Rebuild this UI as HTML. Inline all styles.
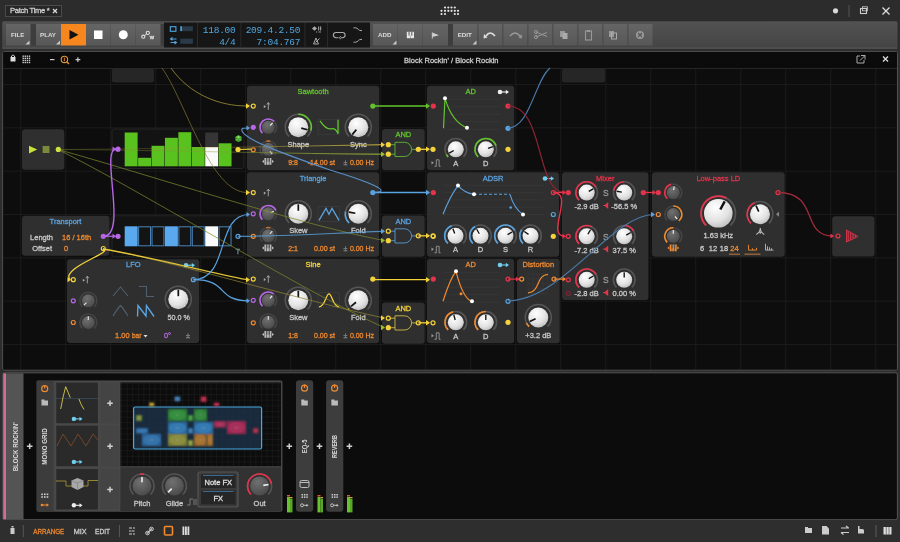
<!DOCTYPE html>
<html><head><meta charset="utf-8"><title>Patch Time</title>
<style>html,body{margin:0;padding:0;background:#0e0e0e;width:900px;height:542px;overflow:hidden} svg{display:block;will-change:transform} </style>
</head><body>
<svg width="900" height="542" viewBox="0 0 900 542" font-family='"Liberation Sans", sans-serif'>
<defs>
<radialGradient id="kw" cx="0.4" cy="0.3" r="0.8"><stop offset="0" stop-color="#ffffff"/><stop offset="0.6" stop-color="#e2e2e2"/><stop offset="1" stop-color="#b5b5b5"/></radialGradient>
<radialGradient id="kd" cx="0.4" cy="0.3" r="0.8"><stop offset="0" stop-color="#707070"/><stop offset="1" stop-color="#464646"/></radialGradient>
<linearGradient id="tb" x1="0" y1="0" x2="0" y2="1"><stop offset="0" stop-color="#525252"/><stop offset="1" stop-color="#444444"/></linearGradient>
<linearGradient id="btn" x1="0" y1="0" x2="0" y2="1"><stop offset="0" stop-color="#656565"/><stop offset="1" stop-color="#575757"/></linearGradient>
<pattern id="grid" x="20.2" y="84.0" width="45" height="43.333" patternUnits="userSpaceOnUse"><rect width="45" height="43.333" fill="#0d0d0d"/><path d="M0,0.5 H45 M0.5,0 V43.333" stroke="#1a1a1a" stroke-width="1"/></pattern>
<pattern id="fgrid" x="121" y="383" width="5.6" height="5.6" patternUnits="userSpaceOnUse"><rect width="5.6" height="5.6" fill="#0c0c0c"/><path d="M0,0 H5.6 M0,0 V5.6" stroke="#242424" stroke-width="0.7"/></pattern>
<filter id="bl" x="-30%" y="-30%" width="160%" height="160%"><feGaussianBlur stdDeviation="0.8"/></filter>
<radialGradient id="glow" cx="0.5" cy="0.5" r="0.6"><stop offset="0" stop-color="#fff" stop-opacity="0.18"/><stop offset="0.6" stop-color="#000" stop-opacity="0"/><stop offset="1" stop-color="#000" stop-opacity="0.3"/></radialGradient>
</defs>
<rect x="0" y="0" width="900" height="21" fill="#2c2c2c" />
<rect x="5.5" y="5.5" width="56" height="11" fill="#262626" stroke="#4a4a4a" stroke-width="1" />
<text x="10" y="13" font-size="7.6" fill="#d0d0d0" text-anchor="start" font-weight="normal" stroke="#d0d0d0" stroke-width="0.28" letter-spacing="-0.3">Patch Time *</text>
<path d="M53,9 L57,13 M57,9 L53,13" stroke="#ddd" fill="none" stroke-width="1.2" />
<circle cx="445" cy="7.5" r="1.1" fill="#e6e6e6" />
<circle cx="448.3" cy="7.5" r="1.1" fill="#e6e6e6" />
<circle cx="451.5" cy="7.5" r="1.1" fill="#e6e6e6" />
<circle cx="454.8" cy="7.5" r="1.1" fill="#e6e6e6" />
<circle cx="441.5" cy="10.8" r="1.1" fill="#e6e6e6" />
<circle cx="445" cy="10.8" r="1.1" fill="#e6e6e6" />
<circle cx="448.3" cy="10.8" r="1.1" fill="#e6e6e6" />
<circle cx="451.5" cy="10.8" r="1.1" fill="#e6e6e6" />
<circle cx="454.8" cy="10.8" r="1.1" fill="#e6e6e6" />
<circle cx="458" cy="10.8" r="1.1" fill="#e6e6e6" />
<circle cx="441.5" cy="14" r="1.1" fill="#e6e6e6" />
<circle cx="445" cy="14" r="1.1" fill="#e6e6e6" />
<circle cx="454.8" cy="14" r="1.1" fill="#e6e6e6" />
<circle cx="458" cy="14" r="1.1" fill="#e6e6e6" />
<circle cx="835.5" cy="10.8" r="2.6" fill="#d8d8d8" />
<line x1="849" y1="5" x2="849" y2="17" stroke="#555" stroke-width="1" />
<rect x="860.5" y="8.5" width="6" height="5" fill="none" stroke="#ccc" stroke-width="1.1" />
<rect x="862.5" y="6.8" width="5" height="4" fill="none" stroke="#ccc" stroke-width="0.8" />
<path d="M882.5,7.5 L889.5,14.5 M889.5,7.5 L882.5,14.5" stroke="#ddd" fill="none" stroke-width="1.3" />
<rect x="0" y="20.5" width="900" height="31" fill="#2c2c2c" />
<rect x="2.2" y="21.3" width="895.3" height="27" fill="url(#tb)" rx="1.5" />
<rect x="2.2" y="47.6" width="895.3" height="1.1" fill="#5a5a5a" />
<rect x="30.3" y="24" width="5.7" height="21.5" fill="#3d3d3d" />
<rect x="160" y="24" width="4" height="21.5" fill="#3d3d3d" />
<rect x="448" y="24" width="5" height="21.5" fill="#3d3d3d" />
<rect x="6" y="24" width="24.5" height="21.5" fill="url(#btn)" />
<path d="M29.5,44.5 L29.5,40.5 L25.5,44.5 Z" stroke="none" fill="#c8c8c8" stroke-width="1" />
<text x="17.75" y="37.4" font-size="6.2" fill="#dcdcdc" text-anchor="middle" font-weight="bold" >FILE</text>
<rect x="36" y="24" width="25" height="21.5" fill="url(#btn)" />
<path d="M60,44.5 L60,40.5 L56,44.5 Z" stroke="none" fill="#c8c8c8" stroke-width="1" />
<text x="48.0" y="37.4" font-size="6.2" fill="#dcdcdc" text-anchor="middle" font-weight="bold" >PLAY</text>
<rect x="61" y="24" width="25" height="21.5" fill="#f6871f" />
<path d="M69.5,30 L78.5,34.75 L69.5,39.5 Z" stroke="none" fill="#111" stroke-width="1" />
<rect x="86" y="24" width="24.5" height="21.5" fill="url(#btn)" />
<rect x="94" y="30.5" width="8.5" height="8.5" fill="#fff" />
<rect x="111" y="24" width="24.5" height="21.5" fill="url(#btn)" />
<circle cx="123.3" cy="34.7" r="4.5" fill="#fff" />
<rect x="136" y="24" width="24.5" height="21.5" fill="url(#btn)" />
<circle cx="143.3" cy="36.7" r="1.6" fill="none" stroke="#e0e0e0" stroke-width="1.1" />
<circle cx="147.8" cy="32.9" r="1.6" fill="none" stroke="#e0e0e0" stroke-width="1.1" />
<line x1="144.5" y1="35.6" x2="146.7" y2="34" stroke="#e0e0e0" stroke-width="1" />
<text x="152" y="38.8" font-size="6" fill="#e0e0e0" text-anchor="middle" font-weight="normal" stroke="#e0e0e0" stroke-width="0.28" >w</text>
<rect x="164" y="22.5" width="206" height="25" fill="#161616" />
<line x1="197.5" y1="23" x2="197.5" y2="47" stroke="#2a2a2a" stroke-width="1" />
<line x1="240.8" y1="23" x2="240.8" y2="47" stroke="#2a2a2a" stroke-width="1" />
<line x1="305" y1="23" x2="305" y2="47" stroke="#2a2a2a" stroke-width="1" />
<line x1="327.5" y1="23" x2="327.5" y2="47" stroke="#2a2a2a" stroke-width="1" />
<rect x="170.3" y="26.7" width="5.6" height="4.6" fill="none" stroke="#4fa6df" stroke-width="1.1" />
<rect x="180.3" y="26.3" width="12.6" height="4.8" fill="#2a3a48" />
<rect x="180.3" y="26.3" width="1.6" height="4.8" fill="#4fa6df" />
<path d="M170.5,39 H176.5 M172.5,37.3 L170.5,39 L172.5,40.3 M170.5,42.5 H176.5 M174.5,41.2 L176.5,42.5 L174.5,44" stroke="#4fa6df" fill="none" stroke-width="1.1" />
<rect x="180.3" y="38.6" width="12.6" height="5.2" fill="#2a3a48" />
<text x="235.5" y="32.8" font-size="9.5" fill="#4fa6df" text-anchor="end" font-weight="normal" font-family="Liberation Mono" letter-spacing="-0.25">118.00</text>
<text x="235.5" y="44.6" font-size="9.5" fill="#4fa6df" text-anchor="end" font-weight="normal" font-family="Liberation Mono" letter-spacing="-0.25">4/4</text>
<text x="300.2" y="32.8" font-size="9.5" fill="#4fa6df" text-anchor="end" font-weight="normal" font-family="Liberation Mono" letter-spacing="-0.25">209.4.2.50</text>
<text x="300.2" y="44.6" font-size="9.5" fill="#4fa6df" text-anchor="end" font-weight="normal" font-family="Liberation Mono" letter-spacing="-0.25">7:04.767</text>
<path d="M312,28.5 L314.5,26.2 L317,28.5 L314.5,30.8 Z" stroke="none" fill="#aaa" stroke-width="1" />
<rect x="318" y="26.5" width="1.2" height="4" fill="#999" />
<rect x="320" y="26.5" width="1.2" height="4" fill="#999" />
<path d="M316,32 h1.2 M318.5,32 h2.5" stroke="#999" fill="none" stroke-width="1" />
<path d="M313.5,44 L316,38 L318.5,44 Z M315.5,42.5 L319.5,38.5" stroke="#aaa" fill="none" stroke-width="1" />
<path d="M336,32.5 h6.5 a2.6,2.6 0 0 1 0,5.2 h-1.5 M338.5,37.7 h-2.5 a2.6,2.6 0 0 1 0,-5.2" stroke="#aaa" fill="none" stroke-width="1.1" />
<path d="M341,36.3 l-1.8,1.4 l1.8,1.4" stroke="#aaa" fill="none" stroke-width="0.9" />
<path d="M353.5,27.8 h2 q1.5,0 3,1.8 q1,1 2.5,1 h1" stroke="#aaa" fill="none" stroke-width="1" />
<path d="M353.5,42.2 h2 q1.5,0 3,-1.8 q1,-1 2.5,-1 h1" stroke="#aaa" fill="none" stroke-width="1" />
<rect x="373" y="24" width="24.5" height="21.5" fill="url(#btn)" />
<path d="M396.5,44.5 L396.5,40.5 L392.5,44.5 Z" stroke="none" fill="#c8c8c8" stroke-width="1" />
<text x="384.75" y="37.4" font-size="6.2" fill="#dcdcdc" text-anchor="middle" font-weight="bold" >ADD</text>
<rect x="398" y="24" width="24.5" height="21.5" fill="url(#btn)" />
<rect x="406.8" y="31.8" width="7.2" height="6.4" fill="#e8e8e8" />
<rect x="408.6" y="31.8" width="0.9" height="3.8" fill="#444" />
<rect x="411.4" y="31.8" width="0.9" height="3.8" fill="#444" />
<line x1="410.4" y1="35.6" x2="410.4" y2="38.2" stroke="#777" stroke-width="0.5" />
<rect x="423" y="24" width="25" height="21.5" fill="url(#btn)" />
<path d="M432.3,32.5 L439,35.2 L432.3,37 Z" stroke="none" fill="#d0d0d0" stroke-width="1" />
<line x1="432.3" y1="32.5" x2="432.3" y2="38.7" stroke="#d0d0d0" stroke-width="0.9" />
<rect x="453" y="24" width="24.5" height="21.5" fill="url(#btn)" />
<path d="M476.5,44.5 L476.5,40.5 L472.5,44.5 Z" stroke="none" fill="#c8c8c8" stroke-width="1" />
<text x="464.75" y="37.4" font-size="6.2" fill="#dcdcdc" text-anchor="middle" font-weight="bold" >EDIT</text>
<rect x="478" y="24" width="24.5" height="21.5" fill="url(#btn)" />
<line x1="478" y1="24" x2="478" y2="45.5" stroke="#4a4a4a" stroke-width="0.8" />
<rect x="503" y="24" width="24.5" height="21.5" fill="url(#btn)" />
<line x1="503" y1="24" x2="503" y2="45.5" stroke="#4a4a4a" stroke-width="0.8" />
<rect x="528" y="24" width="24.5" height="21.5" fill="url(#btn)" />
<line x1="528" y1="24" x2="528" y2="45.5" stroke="#4a4a4a" stroke-width="0.8" />
<rect x="553" y="24" width="24.5" height="21.5" fill="url(#btn)" />
<line x1="553" y1="24" x2="553" y2="45.5" stroke="#4a4a4a" stroke-width="0.8" />
<rect x="578" y="24" width="24.5" height="21.5" fill="url(#btn)" />
<line x1="578" y1="24" x2="578" y2="45.5" stroke="#4a4a4a" stroke-width="0.8" />
<rect x="603" y="24" width="24.5" height="21.5" fill="url(#btn)" />
<line x1="603" y1="24" x2="603" y2="45.5" stroke="#4a4a4a" stroke-width="0.8" />
<rect x="628" y="24" width="24.5" height="21.5" fill="url(#btn)" />
<line x1="628" y1="24" x2="628" y2="45.5" stroke="#4a4a4a" stroke-width="0.8" />
<path d="M486,36 q4,-6 9,0" stroke="#e0e0e0" fill="none" stroke-width="1.6" />
<path d="M484,34 L487.5,37.5 L483.5,38.5 Z" stroke="none" fill="#e0e0e0" stroke-width="1" />
<path d="M510,36 q5,-6 10,0" stroke="#999" fill="none" stroke-width="1.4" />
<path d="M521.5,34 L518.5,37.5 L522,38.5 Z" stroke="none" fill="#999" stroke-width="1" />
<path d="M536,32 L547,36.5 M536,37 L547,32.5" stroke="#999" fill="none" stroke-width="1" />
<circle cx="536" cy="32" r="1.6" fill="none" stroke="#999" stroke-width="1" />
<circle cx="536" cy="37" r="1.6" fill="none" stroke="#999" stroke-width="1" />
<rect x="560" y="31" width="5" height="6" fill="#999" />
<rect x="562.5" y="33" width="5" height="6" fill="#aaa" />
<rect x="585.5" y="31" width="6" height="9" fill="none" stroke="#999" stroke-width="1.1" />
<rect x="587" y="30" width="3" height="2" fill="#999" />
<rect x="609" y="31" width="5" height="6" fill="#999" />
<rect x="611.5" y="33" width="5" height="6" fill="none" stroke="#aaa" stroke-width="1" />
<circle cx="640" cy="35" r="4" fill="#999" />
<path d="M638,33 L642,37 M642,33 L638,37" stroke="#555" fill="none" stroke-width="1.2" />
<rect x="0" y="49" width="900" height="493" fill="#2d2d2d" />
<rect x="2.8" y="51.4" width="894.6" height="318.6" fill="#0d0d0d" rx="2" stroke="#585858" stroke-width="1" />
<rect x="3.3" y="51.9" width="893.6" height="16.6" fill="#0b0b0b" />
<line x1="3.3" y1="68.5" x2="897" y2="68.5" stroke="#262626" stroke-width="1" />
<rect x="3.3" y="69" width="893.6" height="300.5" fill="url(#grid)" />
<rect x="10.5" y="57" width="5" height="4.5" fill="#ddd" />
<path d="M11.5,57.5 v-1.5 a1.8,1.8 0 0 1 3,0 v1.5" stroke="#ddd" fill="none" stroke-width="1" />
<rect x="22.5" y="55.5" width="1.4" height="1.4" fill="#ccc" />
<rect x="22.5" y="57.6" width="1.4" height="1.4" fill="#ccc" />
<rect x="22.5" y="59.7" width="1.4" height="1.4" fill="#ccc" />
<rect x="22.5" y="61.8" width="1.4" height="1.4" fill="#ccc" />
<rect x="24.6" y="55.5" width="1.4" height="1.4" fill="#ccc" />
<rect x="24.6" y="57.6" width="1.4" height="1.4" fill="#ccc" />
<rect x="24.6" y="59.7" width="1.4" height="1.4" fill="#ccc" />
<rect x="24.6" y="61.8" width="1.4" height="1.4" fill="#ccc" />
<rect x="26.7" y="55.5" width="1.4" height="1.4" fill="#ccc" />
<rect x="26.7" y="57.6" width="1.4" height="1.4" fill="#ccc" />
<rect x="26.7" y="59.7" width="1.4" height="1.4" fill="#ccc" />
<rect x="26.7" y="61.8" width="1.4" height="1.4" fill="#ccc" />
<rect x="28.8" y="55.5" width="1.4" height="1.4" fill="#ccc" />
<rect x="28.8" y="57.6" width="1.4" height="1.4" fill="#ccc" />
<rect x="28.8" y="59.7" width="1.4" height="1.4" fill="#ccc" />
<rect x="28.8" y="61.8" width="1.4" height="1.4" fill="#ccc" />
<line x1="50" y1="59.6" x2="54.5" y2="59.6" stroke="#ccc" stroke-width="1.2" />
<circle cx="64.4" cy="59.4" r="3.2" fill="none" stroke="#e0963a" stroke-width="1.1" />
<line x1="66.7" y1="61.7" x2="69" y2="64" stroke="#e0963a" stroke-width="1.3" />
<rect x="63.8" y="57.6" width="1.2" height="3.6" fill="#c07020" />
<path d="M75.5,59.6 h4.8 M77.9,57.2 v4.8" stroke="#ccc" fill="none" stroke-width="1.2" />
<text x="451.3" y="62.8" font-size="7.5" fill="#cfcfcf" text-anchor="middle" font-weight="normal" stroke="#cfcfcf" stroke-width="0.28" >Block Rockin' / Block Rockin</text>
<path d="M860,56 h-3 v7 h7 v-3 M861,55.5 h4 v4 M865,55.5 L860,60.5" stroke="#aaa" fill="none" stroke-width="1" />
<path d="M883,56.5 L888,61.5 M888,56.5 L883,61.5" stroke="#ddd" fill="none" stroke-width="1.3" />
<rect x="112" y="68.5" width="42" height="14" fill="#262626" rx="2" />
<rect x="562" y="68.5" width="43" height="14" fill="#262626" rx="2" />
<rect x="22" y="129.3" width="42.3" height="40.5" fill="#2f2f2f" rx="3" />
<path d="M29,145.7 L37.2,149.6 L29,153.6 Z" stroke="none" fill="#c7e03a" stroke-width="1" />
<rect x="42.6" y="146" width="6.9" height="7" fill="#7a8a3a" />
<rect x="112" y="129" width="132" height="39.5" fill="#131313" rx="2" stroke="#2c2c2c" stroke-width="0.8" />
<rect x="124.7" y="132.5" width="12.9" height="33.80000000000001" fill="#5ac21f" />
<rect x="138.12" y="157.8" width="12.9" height="8.5" fill="#5ac21f" />
<rect x="151.54" y="145.8" width="12.9" height="20.5" fill="#5ac21f" />
<rect x="164.96" y="137.8" width="12.9" height="28.5" fill="#5ac21f" />
<rect x="178.38" y="132.2" width="12.9" height="34.10000000000002" fill="#5ac21f" />
<rect x="191.8" y="147" width="12.9" height="19.30000000000001" fill="#5ac21f" />
<rect x="205.22" y="132.5" width="12.9" height="14.5" fill="#353535" />
<rect x="205.22" y="147" width="12.9" height="19.30000000000001" fill="#fafafa" />
<rect x="218.64" y="143.3" width="12.9" height="23.0" fill="#5ac21f" />
<path d="M235.3,137 L238.5,135.3 L241.7,137 V140.6 L238.5,142.3 L235.3,140.6 Z" stroke="none" fill="#3f9a22" stroke-width="1" />
<path d="M235.3,137 L238.5,138.7 L241.7,137 L238.5,135.3 Z" stroke="none" fill="#62c83a" stroke-width="1" />
<circle cx="238.5" cy="137" r="0.5" fill="#cfe" />
<circle cx="237" cy="139.8" r="0.5" fill="#cfe" />
<circle cx="240" cy="139.8" r="0.5" fill="#cfe" />
<rect x="112" y="215.8" width="132" height="41" fill="#131313" rx="2" stroke="#2c2c2c" stroke-width="0.8" />
<rect x="124.7" y="226.3" width="12.9" height="20" fill="#5aa8ee" />
<rect x="138.62" y="226.8" width="11.9" height="19" fill="#141414" stroke="#4a84b8" stroke-width="1" />
<rect x="152.04" y="226.8" width="11.9" height="19" fill="#141414" stroke="#4a84b8" stroke-width="1" />
<rect x="164.96" y="226.3" width="12.9" height="20" fill="#5aa8ee" />
<rect x="178.88" y="226.8" width="11.9" height="19" fill="#141414" stroke="#4a84b8" stroke-width="1" />
<rect x="192.3" y="226.8" width="11.9" height="19" fill="#141414" stroke="#4a84b8" stroke-width="1" />
<rect x="205.22" y="226.3" width="12.9" height="20" fill="#fafafa" />
<rect x="219.14" y="226.8" width="11.9" height="19" fill="#141414" stroke="#4a84b8" stroke-width="1" />
<text x="238" y="253.5" font-size="7" fill="#6a8fb0" text-anchor="middle" font-weight="normal" stroke="#6a8fb0" stroke-width="0.28" >T</text>
<rect x="22" y="215.8" width="87.5" height="40" fill="#2f2f2f" rx="3" />
<text x="65.5" y="223.7" font-size="7.5" fill="#5aa3e0" text-anchor="middle" font-weight="normal" stroke="#5aa3e0" stroke-width="0.28" >Transport</text>
<text x="53" y="239.8" font-size="7.5" fill="#cacaca" text-anchor="end" font-weight="normal" stroke="#cacaca" stroke-width="0.28" >Length</text>
<text x="62" y="239.8" font-size="7.5" fill="#ef8a30" text-anchor="start" font-weight="normal" stroke="#ef8a30" stroke-width="0.28" >16 / 16th</text>
<text x="52" y="251.2" font-size="7.5" fill="#cacaca" text-anchor="end" font-weight="normal" stroke="#cacaca" stroke-width="0.28" >Offset</text>
<text x="64" y="251.2" font-size="7.5" fill="#ef8a30" text-anchor="start" font-weight="normal" stroke="#ef8a30" stroke-width="0.28" >0</text>
<rect x="67" y="259.2" width="132.2" height="83.8" fill="#2f2f2f" rx="3" />
<text x="133.3" y="267.3" font-size="7.5" fill="#5aa3e0" text-anchor="middle" font-weight="normal" stroke="#5aa3e0" stroke-width="0.28" >LFO</text>
<circle cx="186" cy="265.2" r="2.3" fill="#6fd0ef" />
<line x1="186" y1="265.2" x2="192.5" y2="265.2" stroke="#6fd0ef" stroke-width="1.1" />
<path d="M195,265.2 L191.8,262.9 L191.8,267.5 Z" stroke="none" fill="#6fd0ef" stroke-width="1" />
<circle cx="73.3" cy="279.7" r="2.0" fill="none" stroke="#f3d23c" stroke-width="1.2" />
<path d="M85,280.2 L82.8,278.65999999999997 L82.8,281.74 Z" stroke="none" fill="#aaa" stroke-width="1" />
<path d="M87.3,283.4 V276.4 M85.8,278.2 L87.3,276.2 L88.8,278.2" stroke="#b0b0b0" fill="none" stroke-width="0.85" />
<circle cx="73.3" cy="300.8" r="2.0" fill="none" stroke="#b866e8" stroke-width="1.2" />
<path d="M82.29,306.81 A8.5,8.5 0 1 1 94.31,306.81" stroke="#444" fill="none" stroke-width="1.6" />
<circle cx="88.3" cy="300.8" r="6.5" fill="url(#kd)" />
<line x1="86.46" y1="302.64" x2="83.93" y2="305.17" stroke="#ddd" stroke-width="1.2" stroke-linecap="butt"/>
<circle cx="73.3" cy="322.5" r="2.0" fill="none" stroke="#ef8a30" stroke-width="1.2" />
<path d="M82.29,328.51 A8.5,8.5 0 1 1 94.31,328.51" stroke="#444" fill="none" stroke-width="1.6" />
<circle cx="88.3" cy="322.5" r="6.5" fill="url(#kd)" />
<line x1="88.30" y1="319.90" x2="88.30" y2="316.32" stroke="#ddd" stroke-width="1.2" stroke-linecap="butt"/>
<path d="M113,296 L120.5,287 L128,296" stroke="#50606e" fill="none" stroke-width="1.1" />
<path d="M139,286.5 H146.5 V296.5 H154" stroke="#50606e" fill="none" stroke-width="1.1" />
<path d="M113,316 Q118,308 120.5,305.5 Q123,308 128,316" stroke="#50606e" fill="none" stroke-width="1.1" />
<path d="M137.5,316.5 L138,305.5 L146,316 L146.5,305.5 L154,316.5" stroke="#5aa3e0" fill="none" stroke-width="1.4" />
<path d="M169.11,308.39 A13,13 0 1 1 187.49,308.39" stroke="#555" fill="none" stroke-width="1.6" />
<circle cx="178.3" cy="299.2" r="10" fill="url(#kw)" />
<line x1="178.30" y1="296.20" x2="178.30" y2="289.70" stroke="#111" stroke-width="1.7000000000000002" stroke-linecap="butt"/>
<text x="178.8" y="319.5" font-size="7.2" fill="#cacaca" text-anchor="middle" font-weight="normal" stroke="#cacaca" stroke-width="0.28" >50.0 %</text>
<text x="115" y="338" font-size="7.5" fill="#ef8a30" text-anchor="start" font-weight="normal" stroke="#ef8a30" stroke-width="0.28" >1.00</text>
<text x="132" y="338" font-size="6.5" fill="#ef8a30" text-anchor="start" font-weight="normal" stroke="#ef8a30" stroke-width="0.28" >bar</text>
<path d="M143.5,335 h4 l-2,2.5 Z" stroke="none" fill="#ddd" stroke-width="1" />
<text x="167.5" y="338" font-size="7.5" fill="#b866e8" text-anchor="middle" font-weight="normal" stroke="#b866e8" stroke-width="0.28" >0°</text>
<text x="188" y="338" font-size="7.5" fill="#888" text-anchor="middle" font-weight="normal" stroke="#888" stroke-width="0.28" >±</text>
<rect x="247" y="85.8" width="132.2" height="84.5" fill="#2f2f2f" rx="3" />
<text x="313.1" y="94.1" font-size="7.5" fill="#62c52b" text-anchor="middle" font-weight="normal" stroke="#62c52b" stroke-width="0.28" >Sawtooth</text>
<circle cx="253.3" cy="106.1" r="2.0" fill="none" stroke="#f3d23c" stroke-width="1.2" />
<path d="M266,106.6 L263.8,105.05999999999999 L263.8,108.14 Z" stroke="none" fill="#aaa" stroke-width="1" />
<path d="M268.3,109.8 V102.8 M266.8,104.6 L268.3,102.6 L269.8,104.6" stroke="#b0b0b0" fill="none" stroke-width="0.85" />
<circle cx="372.8" cy="106.1" r="2.6" fill="#62c52b" />
<circle cx="253.3" cy="127.3" r="2.6" fill="#b866e8" />
<path d="M262.43,133.17 A8.3,8.3 0 1 1 274.17,133.17" stroke="#444" fill="none" stroke-width="1.6" />
<path d="M262.43,133.17 A8.3,8.3 0 0 1 274.17,121.43" stroke="#b866e8" fill="none" stroke-width="1.6" />
<circle cx="268.3" cy="127.3" r="6.5" fill="url(#kd)" />
<line x1="270.14" y1="125.46" x2="272.67" y2="122.93" stroke="#eee" stroke-width="1.2" stroke-linecap="butt"/>
<path d="M289.11,136.49 A13,13 0 1 1 307.49,136.49" stroke="#555" fill="none" stroke-width="1.6" />
<path d="M298.30,114.30 A13,13 0 0 1 310.86,130.66" stroke="#62c52b" fill="none" stroke-width="1.6" />
<circle cx="298.3" cy="127.3" r="10" fill="url(#kw)" />
<line x1="301.20" y1="128.08" x2="307.48" y2="129.76" stroke="#111" stroke-width="1.7000000000000002" stroke-linecap="butt"/>
<path d="M349.11,136.49 A13,13 0 1 1 367.49,136.49" stroke="#555" fill="none" stroke-width="1.6" />
<circle cx="358.3" cy="127.3" r="10" fill="url(#kw)" />
<line x1="356.37" y1="129.60" x2="352.19" y2="134.58" stroke="#111" stroke-width="1.7000000000000002" stroke-linecap="butt"/>
<text x="298.3" y="146.8" font-size="7.5" fill="#cacaca" text-anchor="middle" font-weight="normal" stroke="#cacaca" stroke-width="0.28" >Shape</text>
<text x="358.3" y="146.8" font-size="7.5" fill="#cacaca" text-anchor="middle" font-weight="normal" stroke="#cacaca" stroke-width="0.28" >Sync</text>
<rect x="318" y="119.8" width="21.5" height="15" fill="none" stroke="#444" stroke-width="0.5" />
<path d="M320,120.8 Q326,129.8 331,128.8 T338,133.8 V119.8" stroke="#62c52b" fill="none" stroke-width="1.3" />
<circle cx="253.3" cy="149.8" r="2.0" fill="none" stroke="#ef8a30" stroke-width="1.2" />
<path d="M262.43,155.17 A8.3,8.3 0 1 1 274.17,155.17" stroke="#444" fill="none" stroke-width="1.6" />
<circle cx="268.3" cy="149.3" r="6.5" fill="url(#kd)" />
<line x1="269.97" y1="151.29" x2="272.27" y2="154.03" stroke="#ddd" stroke-width="1.2" stroke-linecap="butt"/>
<path d="M266.29,141.25 A8.3,8.3 0 0 1 270.31,141.25" stroke="#c8702a" fill="none" stroke-width="1.6" />
<path d="M262,161.39999999999998 l2,-1.6 v3.2 Z M274,161.39999999999998 l-2,-1.6 v3.2 Z" stroke="none" fill="#b8b8b8" stroke-width="1" />
<rect x="264.4" y="157.99999999999997" width="2" height="6.8" fill="#b8b8b8" />
<rect x="266.9" y="157.99999999999997" width="2" height="6.8" fill="#b8b8b8" />
<rect x="269.4" y="157.99999999999997" width="2" height="6.8" fill="#b8b8b8" />
<rect x="266.1" y="157.99999999999997" width="1.3" height="3.8" fill="#555" />
<rect x="268.6" y="157.99999999999997" width="1.3" height="3.8" fill="#555" />
<text x="293" y="164.8" font-size="7" fill="#ef8a30" text-anchor="middle" font-weight="normal" stroke="#ef8a30" stroke-width="0.28" >9:8</text>
<text x="335" y="164.8" font-size="7" fill="#ef8a30" text-anchor="end" font-weight="normal" stroke="#ef8a30" stroke-width="0.28" >-14.00 st</text>
<text x="345.5" y="164.8" font-size="7" fill="#888" text-anchor="middle" font-weight="normal" stroke="#888" stroke-width="0.28" >±</text>
<text x="374" y="164.8" font-size="7" fill="#ef8a30" text-anchor="end" font-weight="normal" stroke="#ef8a30" stroke-width="0.28" >0.00 Hz</text>
<rect x="247" y="172.3" width="132.2" height="84.5" fill="#2f2f2f" rx="3" />
<text x="313.1" y="180.60000000000002" font-size="7.5" fill="#5aa3e0" text-anchor="middle" font-weight="normal" stroke="#5aa3e0" stroke-width="0.28" >Triangle</text>
<circle cx="253.3" cy="192.60000000000002" r="2.0" fill="none" stroke="#f3d23c" stroke-width="1.2" />
<path d="M266,193.10000000000002 L263.8,191.56000000000003 L263.8,194.64000000000001 Z" stroke="none" fill="#aaa" stroke-width="1" />
<path d="M268.3,196.3 V189.3 M266.8,191.10000000000002 L268.3,189.10000000000002 L269.8,191.10000000000002" stroke="#b0b0b0" fill="none" stroke-width="0.85" />
<circle cx="372.8" cy="192.60000000000002" r="2.6" fill="#5aa3e0" />
<circle cx="253.3" cy="213.8" r="2.0" fill="none" stroke="#b866e8" stroke-width="1.2" />
<path d="M262.43,219.67 A8.3,8.3 0 1 1 274.17,219.67" stroke="#444" fill="none" stroke-width="1.6" />
<path d="M262.43,219.67 A8.3,8.3 0 1 1 275.82,210.29" stroke="#b866e8" fill="none" stroke-width="1.6" />
<circle cx="268.3" cy="213.8" r="6.5" fill="url(#kd)" />
<line x1="270.66" y1="212.70" x2="273.90" y2="211.19" stroke="#eee" stroke-width="1.2" stroke-linecap="butt"/>
<path d="M289.11,222.99 A13,13 0 1 1 307.49,222.99" stroke="#555" fill="none" stroke-width="1.6" />
<circle cx="298.3" cy="213.8" r="10" fill="url(#kw)" />
<line x1="298.30" y1="210.80" x2="298.30" y2="204.30" stroke="#111" stroke-width="1.7000000000000002" stroke-linecap="butt"/>
<path d="M349.11,222.99 A13,13 0 1 1 367.49,222.99" stroke="#555" fill="none" stroke-width="1.6" />
<path d="M349.11,222.99 A13,13 0 0 1 345.50,211.54" stroke="#5aa3e0" fill="none" stroke-width="1.6" />
<circle cx="358.3" cy="213.8" r="10" fill="url(#kw)" />
<line x1="355.35" y1="213.28" x2="348.94" y2="212.15" stroke="#111" stroke-width="1.7000000000000002" stroke-linecap="butt"/>
<text x="298.3" y="233.3" font-size="7.5" fill="#cacaca" text-anchor="middle" font-weight="normal" stroke="#cacaca" stroke-width="0.28" >Skew</text>
<text x="358.3" y="233.3" font-size="7.5" fill="#cacaca" text-anchor="middle" font-weight="normal" stroke="#cacaca" stroke-width="0.28" >Fold</text>
<rect x="318" y="206.3" width="21.5" height="15" fill="none" stroke="#444" stroke-width="0.5" />
<path d="M319,220.3 L326,208.3 L329,214.3 L332,208.3 L339,220.3" stroke="#5aa3e0" fill="none" stroke-width="1.3" />
<circle cx="253.3" cy="236.3" r="2.0" fill="none" stroke="#ef8a30" stroke-width="1.2" />
<path d="M262.43,241.67 A8.3,8.3 0 1 1 274.17,241.67" stroke="#444" fill="none" stroke-width="1.6" />
<circle cx="268.3" cy="235.8" r="6.5" fill="url(#kd)" />
<line x1="269.97" y1="233.81" x2="272.27" y2="231.07" stroke="#ddd" stroke-width="1.2" stroke-linecap="butt"/>
<path d="M266.29,227.75 A8.3,8.3 0 0 1 270.31,227.75" stroke="#c8702a" fill="none" stroke-width="1.6" />
<path d="M262,247.9 l2,-1.6 v3.2 Z M274,247.9 l-2,-1.6 v3.2 Z" stroke="none" fill="#b8b8b8" stroke-width="1" />
<rect x="264.4" y="244.5" width="2" height="6.8" fill="#b8b8b8" />
<rect x="266.9" y="244.5" width="2" height="6.8" fill="#b8b8b8" />
<rect x="269.4" y="244.5" width="2" height="6.8" fill="#b8b8b8" />
<rect x="266.1" y="244.5" width="1.3" height="3.8" fill="#555" />
<rect x="268.6" y="244.5" width="1.3" height="3.8" fill="#555" />
<text x="293" y="251.3" font-size="7" fill="#ef8a30" text-anchor="middle" font-weight="normal" stroke="#ef8a30" stroke-width="0.28" >2:1</text>
<text x="335" y="251.3" font-size="7" fill="#ef8a30" text-anchor="end" font-weight="normal" stroke="#ef8a30" stroke-width="0.28" >0.00 st</text>
<text x="345.5" y="251.3" font-size="7" fill="#888" text-anchor="middle" font-weight="normal" stroke="#888" stroke-width="0.28" >±</text>
<text x="374" y="251.3" font-size="7" fill="#ef8a30" text-anchor="end" font-weight="normal" stroke="#ef8a30" stroke-width="0.28" >0.00 Hz</text>
<rect x="247" y="258.8" width="132.2" height="84.5" fill="#2f2f2f" rx="3" />
<text x="313.1" y="267.1" font-size="7.5" fill="#f3d23c" text-anchor="middle" font-weight="normal" stroke="#f3d23c" stroke-width="0.28" >Sine</text>
<circle cx="253.3" cy="279.1" r="2.0" fill="none" stroke="#f3d23c" stroke-width="1.2" />
<path d="M266,279.6 L263.8,278.06 L263.8,281.14000000000004 Z" stroke="none" fill="#aaa" stroke-width="1" />
<path d="M268.3,282.8 V275.8 M266.8,277.6 L268.3,275.6 L269.8,277.6" stroke="#b0b0b0" fill="none" stroke-width="0.85" />
<circle cx="372.8" cy="279.1" r="2.6" fill="#f3d23c" />
<circle cx="253.3" cy="300.3" r="2.0" fill="none" stroke="#b866e8" stroke-width="1.2" />
<path d="M262.43,306.17 A8.3,8.3 0 1 1 274.17,306.17" stroke="#444" fill="none" stroke-width="1.6" />
<path d="M262.43,306.17 A8.3,8.3 0 0 1 273.64,293.94" stroke="#b866e8" fill="none" stroke-width="1.6" />
<circle cx="268.3" cy="300.3" r="6.5" fill="url(#kd)" />
<line x1="269.97" y1="298.31" x2="272.27" y2="295.57" stroke="#eee" stroke-width="1.2" stroke-linecap="butt"/>
<path d="M289.11,309.49 A13,13 0 1 1 307.49,309.49" stroke="#555" fill="none" stroke-width="1.6" />
<circle cx="298.3" cy="300.3" r="10" fill="url(#kw)" />
<line x1="298.30" y1="297.30" x2="298.30" y2="290.80" stroke="#111" stroke-width="1.7000000000000002" stroke-linecap="butt"/>
<path d="M349.11,309.49 A13,13 0 1 1 367.49,309.49" stroke="#555" fill="none" stroke-width="1.6" />
<path d="M349.11,309.49 A13,13 0 0 1 348.34,308.66" stroke="#f3d23c" fill="none" stroke-width="1.6" />
<circle cx="358.3" cy="300.3" r="10" fill="url(#kw)" />
<line x1="356.00" y1="302.23" x2="351.02" y2="306.41" stroke="#111" stroke-width="1.7000000000000002" stroke-linecap="butt"/>
<text x="298.3" y="319.8" font-size="7.5" fill="#cacaca" text-anchor="middle" font-weight="normal" stroke="#cacaca" stroke-width="0.28" >Skew</text>
<text x="358.3" y="319.8" font-size="7.5" fill="#cacaca" text-anchor="middle" font-weight="normal" stroke="#cacaca" stroke-width="0.28" >Fold</text>
<rect x="318" y="292.8" width="21.5" height="15" fill="none" stroke="#444" stroke-width="0.5" />
<path d="M319,306.8 C325,306.8 326,293.8 329,293.8 C332,293.8 333,306.8 339,306.8" stroke="#f3d23c" fill="none" stroke-width="1.3" />
<circle cx="253.3" cy="322.8" r="2.0" fill="none" stroke="#ef8a30" stroke-width="1.2" />
<path d="M262.43,328.17 A8.3,8.3 0 1 1 274.17,328.17" stroke="#444" fill="none" stroke-width="1.6" />
<circle cx="268.3" cy="322.3" r="6.5" fill="url(#kd)" />
<line x1="268.30" y1="319.70" x2="268.30" y2="316.12" stroke="#ddd" stroke-width="1.2" stroke-linecap="butt"/>
<path d="M262,334.4 l2,-1.6 v3.2 Z M274,334.4 l-2,-1.6 v3.2 Z" stroke="none" fill="#b8b8b8" stroke-width="1" />
<rect x="264.4" y="331.0" width="2" height="6.8" fill="#b8b8b8" />
<rect x="266.9" y="331.0" width="2" height="6.8" fill="#b8b8b8" />
<rect x="269.4" y="331.0" width="2" height="6.8" fill="#b8b8b8" />
<rect x="266.1" y="331.0" width="1.3" height="3.8" fill="#555" />
<rect x="268.6" y="331.0" width="1.3" height="3.8" fill="#555" />
<text x="293" y="337.8" font-size="7" fill="#ef8a30" text-anchor="middle" font-weight="normal" stroke="#ef8a30" stroke-width="0.28" >1:8</text>
<text x="335" y="337.8" font-size="7" fill="#ef8a30" text-anchor="end" font-weight="normal" stroke="#ef8a30" stroke-width="0.28" >0.00 st</text>
<text x="345.5" y="337.8" font-size="7" fill="#888" text-anchor="middle" font-weight="normal" stroke="#888" stroke-width="0.28" >±</text>
<text x="374" y="337.8" font-size="7" fill="#ef8a30" text-anchor="end" font-weight="normal" stroke="#ef8a30" stroke-width="0.28" >0.00 Hz</text>
<rect x="382" y="129" width="42.7" height="41.3" fill="#2f2f2f" rx="3" />
<text x="403.35" y="137.3" font-size="7.5" fill="#62c52b" text-anchor="middle" font-weight="normal" stroke="#62c52b" stroke-width="0.28" >AND</text>
<path d="M395,142.3 H404.5 a7.1,7.1 0 0 1 0,14.2 H395 Z M390,144.7 H395 M390,154.2 H395 M411.6,149.4 H416" stroke="#5cb83a" fill="none" stroke-width="0.9" />
<circle cx="388.3" cy="144.7" r="2.6" fill="#f3d23c" />
<circle cx="388.3" cy="154.2" r="2.6" fill="#f3d23c" />
<circle cx="418.3" cy="149.3" r="2.6" fill="#f3d23c" />
<rect x="382" y="215.5" width="42.7" height="41.3" fill="#2f2f2f" rx="3" />
<text x="403.35" y="223.8" font-size="7.5" fill="#5aa3e0" text-anchor="middle" font-weight="normal" stroke="#5aa3e0" stroke-width="0.28" >AND</text>
<path d="M395,228.8 H404.5 a7.1,7.1 0 0 1 0,14.2 H395 Z M390,231.2 H395 M390,240.7 H395 M411.6,235.9 H416" stroke="#5a9ad8" fill="none" stroke-width="0.9" />
<circle cx="388.3" cy="231.2" r="2.0" fill="none" stroke="#f3d23c" stroke-width="1.2" />
<circle cx="388.3" cy="240.7" r="2.6" fill="#f3d23c" />
<circle cx="418.3" cy="235.8" r="2.0" fill="none" stroke="#f3d23c" stroke-width="1.2" />
<rect x="382" y="302.5" width="42.7" height="41.3" fill="#2f2f2f" rx="3" />
<text x="403.35" y="310.8" font-size="7.5" fill="#f3d23c" text-anchor="middle" font-weight="normal" stroke="#f3d23c" stroke-width="0.28" >AND</text>
<path d="M395,315.8 H404.5 a7.1,7.1 0 0 1 0,14.2 H395 Z M390,318.2 H395 M390,327.7 H395 M411.6,322.9 H416" stroke="#d0b848" fill="none" stroke-width="0.9" />
<circle cx="388.3" cy="318.2" r="2.0" fill="none" stroke="#f3d23c" stroke-width="1.2" />
<circle cx="388.3" cy="327.7" r="2.6" fill="#f3d23c" />
<circle cx="418.3" cy="322.8" r="2.0" fill="none" stroke="#f3d23c" stroke-width="1.2" />
<rect x="427" y="85.8" width="87.2" height="84.5" fill="#2f2f2f" rx="3" />
<text x="470.6" y="94.1" font-size="7.5" fill="#62c52b" text-anchor="middle" font-weight="normal" stroke="#62c52b" stroke-width="0.28" >AD</text>
<circle cx="500" cy="92.0" r="2.3" fill="#eee" />
<line x1="500" y1="92.0" x2="506.5" y2="92.0" stroke="#eee" stroke-width="1.1" />
<path d="M509,92.0 L505.8,89.7 L505.8,94.3 Z" stroke="none" fill="#eee" stroke-width="1" />
<line x1="443" y1="99.3" x2="500" y2="99.3" stroke="#3c3c3c" stroke-width="0.6" />
<line x1="443" y1="106.8" x2="500" y2="106.8" stroke="#3c3c3c" stroke-width="0.6" />
<line x1="443" y1="114.3" x2="500" y2="114.3" stroke="#3c3c3c" stroke-width="0.6" />
<line x1="443" y1="121.8" x2="500" y2="121.8" stroke="#3c3c3c" stroke-width="0.6" />
<line x1="443" y1="129.3" x2="500" y2="129.3" stroke="#3c3c3c" stroke-width="0.6" />
<path d="M443.5,128.3 L445,98.3 Q452,121.8 467,127.8" stroke="#62c52b" fill="none" stroke-width="1.2" />
<circle cx="433.3" cy="106.1" r="2.6" fill="#e5334b" />
<circle cx="508" cy="106.1" r="2.6" fill="#e5334b" />
<circle cx="508" cy="128.3" r="2.6" fill="#5aa3e0" />
<circle cx="508" cy="149.3" r="2.6" fill="#f3d23c" />
<path d="M448.16,156.94 A10.8,10.8 0 1 1 463.44,156.94" stroke="#555" fill="none" stroke-width="1.6" />
<path d="M448.16,156.94 A10.8,10.8 0 0 1 446.45,154.70" stroke="#62c52b" fill="none" stroke-width="1.6" />
<circle cx="455.8" cy="149.3" r="8" fill="url(#kw)" />
<line x1="453.72" y1="150.50" x2="449.22" y2="153.10" stroke="#111" stroke-width="1.36" stroke-linecap="butt"/>
<path d="M478.16,156.94 A10.8,10.8 0 1 1 493.44,156.94" stroke="#555" fill="none" stroke-width="1.6" />
<path d="M478.16,156.94 A10.8,10.8 0 1 1 495.95,145.61" stroke="#62c52b" fill="none" stroke-width="1.6" />
<circle cx="485.8" cy="149.3" r="8" fill="url(#kw)" />
<line x1="488.06" y1="148.48" x2="492.94" y2="146.70" stroke="#111" stroke-width="1.36" stroke-linecap="butt"/>
<text x="455.8" y="165.8" font-size="7.5" fill="#cacaca" text-anchor="middle" font-weight="normal" stroke="#cacaca" stroke-width="0.28" >A</text>
<text x="485.8" y="165.8" font-size="7.5" fill="#cacaca" text-anchor="middle" font-weight="normal" stroke="#cacaca" stroke-width="0.28" >D</text>
<path d="M431.5,161.10000000000002 l2.4,1.7 l-2.4,1.7 Z" stroke="none" fill="#9a9a9a" stroke-width="1" />
<path d="M434.5,166.3 h1.8 v-6.5 h2.8 v6.5 h1.5" stroke="#9a9a9a" fill="none" stroke-width="0.9" />
<circle cx="445" cy="98.3" r="2" fill="#fff" />
<circle cx="467" cy="127.8" r="2" fill="#fff" />
<rect x="427" y="258.8" width="87.2" height="84.5" fill="#2f2f2f" rx="3" />
<text x="470.6" y="267.1" font-size="7.5" fill="#ef8a30" text-anchor="middle" font-weight="normal" stroke="#ef8a30" stroke-width="0.28" >AD</text>
<circle cx="500" cy="265.0" r="2.3" fill="#6fd0ef" />
<line x1="500" y1="265.0" x2="506.5" y2="265.0" stroke="#6fd0ef" stroke-width="1.1" />
<path d="M509,265.0 L505.8,262.7 L505.8,267.3 Z" stroke="none" fill="#6fd0ef" stroke-width="1" />
<line x1="443" y1="272.3" x2="500" y2="272.3" stroke="#3c3c3c" stroke-width="0.6" />
<line x1="443" y1="279.8" x2="500" y2="279.8" stroke="#3c3c3c" stroke-width="0.6" />
<line x1="443" y1="287.3" x2="500" y2="287.3" stroke="#3c3c3c" stroke-width="0.6" />
<line x1="443" y1="294.8" x2="500" y2="294.8" stroke="#3c3c3c" stroke-width="0.6" />
<line x1="443" y1="302.3" x2="500" y2="302.3" stroke="#3c3c3c" stroke-width="0.6" />
<path d="M443,301.3 Q450,278.8 456,271.3 Q463,298.8 472,301.3" stroke="#ef8a30" fill="none" stroke-width="1.2" />
<circle cx="433.3" cy="279.1" r="2.6" fill="#e5334b" />
<circle cx="508" cy="279.1" r="2.0" fill="none" stroke="#e5334b" stroke-width="1.2" />
<circle cx="508" cy="301.3" r="2.0" fill="none" stroke="#5aa3e0" stroke-width="1.2" />
<circle cx="508" cy="322.3" r="2.6" fill="#f3d23c" />
<path d="M448.16,329.94 A10.8,10.8 0 1 1 463.44,329.94" stroke="#555" fill="none" stroke-width="1.6" />
<path d="M448.16,329.94 A10.8,10.8 0 0 1 453.00,311.87" stroke="#ef8a30" fill="none" stroke-width="1.6" />
<circle cx="455.8" cy="322.3" r="8" fill="url(#kw)" />
<line x1="455.18" y1="319.98" x2="453.83" y2="314.96" stroke="#111" stroke-width="1.36" stroke-linecap="butt"/>
<path d="M478.16,329.94 A10.8,10.8 0 1 1 493.44,329.94" stroke="#555" fill="none" stroke-width="1.6" />
<path d="M478.16,329.94 A10.8,10.8 0 0 1 485.80,311.50" stroke="#ef8a30" fill="none" stroke-width="1.6" />
<circle cx="485.8" cy="322.3" r="8" fill="url(#kw)" />
<line x1="485.80" y1="319.90" x2="485.80" y2="314.70" stroke="#111" stroke-width="1.36" stroke-linecap="butt"/>
<text x="455.8" y="338.8" font-size="7.5" fill="#cacaca" text-anchor="middle" font-weight="normal" stroke="#cacaca" stroke-width="0.28" >A</text>
<text x="485.8" y="338.8" font-size="7.5" fill="#cacaca" text-anchor="middle" font-weight="normal" stroke="#cacaca" stroke-width="0.28" >D</text>
<path d="M431.5,334.1 l2.4,1.7 l-2.4,1.7 Z" stroke="none" fill="#9a9a9a" stroke-width="1" />
<path d="M434.5,339.3 h1.8 v-6.5 h2.8 v6.5 h1.5" stroke="#9a9a9a" fill="none" stroke-width="0.9" />
<circle cx="456" cy="271.3" r="2" fill="#fff" />
<circle cx="472" cy="301.3" r="2" fill="#fff" />
<circle cx="461" cy="293.8" r="1.5" fill="#ef8a30" />
<rect x="427" y="172.3" width="132.2" height="84.5" fill="#2f2f2f" rx="3" />
<text x="493.1" y="180.60000000000002" font-size="7.5" fill="#5aa3e0" text-anchor="middle" font-weight="normal" stroke="#5aa3e0" stroke-width="0.28" >ADSR</text>
<circle cx="545" cy="178.5" r="2.3" fill="#6fd0ef" />
<line x1="545" y1="178.5" x2="551.5" y2="178.5" stroke="#6fd0ef" stroke-width="1.1" />
<path d="M554,178.5 L550.8,176.2 L550.8,180.8 Z" stroke="none" fill="#6fd0ef" stroke-width="1" />
<line x1="443" y1="185.3" x2="543" y2="185.3" stroke="#3c3c3c" stroke-width="0.6" />
<line x1="443" y1="192.60000000000002" x2="543" y2="192.60000000000002" stroke="#3c3c3c" stroke-width="0.6" />
<line x1="443" y1="199.9" x2="543" y2="199.9" stroke="#3c3c3c" stroke-width="0.6" />
<line x1="443" y1="207.20000000000002" x2="543" y2="207.20000000000002" stroke="#3c3c3c" stroke-width="0.6" />
<line x1="443" y1="214.5" x2="543" y2="214.5" stroke="#3c3c3c" stroke-width="0.6" />
<path d="M443,214.3 Q450,196.3 458,185.60000000000002 Q465,193.3 474,194.3" stroke="#5aa3e0" fill="none" stroke-width="1.1" />
<path d="M474,194.3 H510" stroke="#5aa3e0" fill="none" stroke-width="1.1" stroke-dasharray="3,2"/>
<path d="M510,194.3 Q514,208.3 523,214.5" stroke="#5aa3e0" fill="none" stroke-width="1.1" />
<circle cx="458" cy="185.60000000000002" r="2" fill="#fff" />
<circle cx="474" cy="194.3" r="2" fill="#fff" />
<circle cx="523" cy="214.5" r="2" fill="#fff" />
<circle cx="510.7" cy="207.5" r="1.3" fill="#5aa3e0" />
<circle cx="433.3" cy="192.60000000000002" r="2.6" fill="#e5334b" />
<circle cx="433.3" cy="236.3" r="2.0" fill="none" stroke="#f3d23c" stroke-width="1.2" />
<circle cx="553.3" cy="192.60000000000002" r="2.0" fill="none" stroke="#e5334b" stroke-width="1.2" />
<circle cx="553.3" cy="214.5" r="2.0" fill="none" stroke="#5aa3e0" stroke-width="1.2" />
<circle cx="553.3" cy="236.3" r="2.6" fill="#f3d23c" />
<path d="M447.86,243.44 A10.8,10.8 0 1 1 463.14,243.44" stroke="#555" fill="none" stroke-width="1.6" />
<path d="M447.86,243.44 A10.8,10.8 0 0 1 451.81,225.65" stroke="#5aa3e0" fill="none" stroke-width="1.6" />
<circle cx="455.5" cy="235.8" r="8" fill="url(#kw)" />
<line x1="454.68" y1="233.54" x2="452.90" y2="228.66" stroke="#111" stroke-width="1.36" stroke-linecap="butt"/>
<text x="455.5" y="252.3" font-size="7.5" fill="#cacaca" text-anchor="middle" font-weight="normal" stroke="#cacaca" stroke-width="0.28" >A</text>
<path d="M472.86,243.44 A10.8,10.8 0 1 1 488.14,243.44" stroke="#555" fill="none" stroke-width="1.6" />
<path d="M472.86,243.44 A10.8,10.8 0 0 1 475.10,226.45" stroke="#5aa3e0" fill="none" stroke-width="1.6" />
<circle cx="480.5" cy="235.8" r="8" fill="url(#kw)" />
<line x1="479.30" y1="233.72" x2="476.70" y2="229.22" stroke="#111" stroke-width="1.36" stroke-linecap="butt"/>
<text x="480.5" y="252.3" font-size="7.5" fill="#cacaca" text-anchor="middle" font-weight="normal" stroke="#cacaca" stroke-width="0.28" >D</text>
<path d="M497.86,243.44 A10.8,10.8 0 1 1 513.14,243.44" stroke="#555" fill="none" stroke-width="1.6" />
<path d="M497.86,243.44 A10.8,10.8 0 1 1 514.85,230.40" stroke="#5aa3e0" fill="none" stroke-width="1.6" />
<circle cx="505.5" cy="235.8" r="8" fill="url(#kw)" />
<line x1="507.58" y1="234.60" x2="512.08" y2="232.00" stroke="#111" stroke-width="1.36" stroke-linecap="butt"/>
<text x="505.5" y="252.3" font-size="7.5" fill="#cacaca" text-anchor="middle" font-weight="normal" stroke="#cacaca" stroke-width="0.28" >S</text>
<path d="M522.86,243.44 A10.8,10.8 0 1 1 538.14,243.44" stroke="#555" fill="none" stroke-width="1.6" />
<path d="M522.86,243.44 A10.8,10.8 0 0 1 521.65,229.61" stroke="#5aa3e0" fill="none" stroke-width="1.6" />
<circle cx="530.5" cy="235.8" r="8" fill="url(#kw)" />
<line x1="528.53" y1="234.42" x2="524.27" y2="231.44" stroke="#111" stroke-width="1.36" stroke-linecap="butt"/>
<text x="530.5" y="252.3" font-size="7.5" fill="#cacaca" text-anchor="middle" font-weight="normal" stroke="#cacaca" stroke-width="0.28" >R</text>
<path d="M431.5,247.60000000000002 l2.4,1.7 l-2.4,1.7 Z" stroke="none" fill="#9a9a9a" stroke-width="1" />
<path d="M434.5,252.8 h1.8 v-6.5 h2.8 v6.5 h1.5" stroke="#9a9a9a" fill="none" stroke-width="0.9" />
<rect x="517" y="258.8" width="42.7" height="84.5" fill="#2f2f2f" rx="3" />
<text x="538.35" y="267.1" font-size="7.5" fill="#ef8a30" text-anchor="middle" font-weight="normal" stroke="#ef8a30" stroke-width="0.28" >Distortion</text>
<line x1="528" y1="273.8" x2="528" y2="293.8" stroke="#3e3e3e" stroke-width="0.5" />
<line x1="528" y1="273.8" x2="548" y2="273.8" stroke="#3e3e3e" stroke-width="0.5" />
<line x1="533" y1="273.8" x2="533" y2="293.8" stroke="#3e3e3e" stroke-width="0.5" />
<line x1="528" y1="278.8" x2="548" y2="278.8" stroke="#3e3e3e" stroke-width="0.5" />
<line x1="538" y1="273.8" x2="538" y2="293.8" stroke="#3e3e3e" stroke-width="0.5" />
<line x1="528" y1="283.8" x2="548" y2="283.8" stroke="#3e3e3e" stroke-width="0.5" />
<line x1="543" y1="273.8" x2="543" y2="293.8" stroke="#3e3e3e" stroke-width="0.5" />
<line x1="528" y1="288.8" x2="548" y2="288.8" stroke="#3e3e3e" stroke-width="0.5" />
<line x1="548" y1="273.8" x2="548" y2="293.8" stroke="#3e3e3e" stroke-width="0.5" />
<line x1="528" y1="293.8" x2="548" y2="293.8" stroke="#3e3e3e" stroke-width="0.5" />
<path d="M528,292.8 C540,292.8 536,274.8 548,274.3" stroke="#ef8a30" fill="none" stroke-width="1.2" />
<circle cx="521.7" cy="279.1" r="2.0" fill="none" stroke="#ef8a30" stroke-width="1.2" />
<circle cx="554" cy="279.1" r="2.0" fill="none" stroke="#ef8a30" stroke-width="1.2" />
<path d="M529.11,326.69 A13,13 0 1 1 547.49,326.69" stroke="#555" fill="none" stroke-width="1.6" />
<path d="M529.11,326.69 A13,13 0 0 1 526.52,322.99" stroke="#ef8a30" fill="none" stroke-width="1.6" />
<circle cx="538.3" cy="317.5" r="10" fill="url(#kw)" />
<line x1="535.58" y1="318.77" x2="529.69" y2="321.51" stroke="#111" stroke-width="1.7000000000000002" stroke-linecap="butt"/>
<text x="538.3" y="338.3" font-size="7.5" fill="#cacaca" text-anchor="middle" font-weight="normal" stroke="#cacaca" stroke-width="0.28" >+3.2 dB</text>
<rect x="562" y="172.3" width="86.5" height="127.6" fill="#2f2f2f" rx="3" />
<text x="605.25" y="180.60000000000002" font-size="7.5" fill="#e5334b" text-anchor="middle" font-weight="normal" stroke="#e5334b" stroke-width="0.28" >Mixer</text>
<circle cx="568.3" cy="192.60000000000002" r="2.6" fill="#e5334b" />
<path d="M579.06,200.24 A10.8,10.8 0 1 1 594.34,200.24" stroke="#555" fill="none" stroke-width="1.6" />
<path d="M579.06,200.24 A10.8,10.8 0 1 1 596.05,187.20" stroke="#e5334b" fill="none" stroke-width="1.6" />
<circle cx="586.7" cy="192.60000000000002" r="8" fill="url(#kw)" />
<line x1="588.78" y1="191.40" x2="593.28" y2="188.80" stroke="#111" stroke-width="1.36" stroke-linecap="butt"/>
<path d="M616.56,200.24 A10.8,10.8 0 1 1 631.84,200.24" stroke="#555" fill="none" stroke-width="1.6" />
<path d="M613.56,190.72 A10.8,10.8 0 0 1 624.20,181.80" stroke="#e5334b" fill="none" stroke-width="1.6" />
<circle cx="624.2" cy="192.60000000000002" r="8" fill="url(#kw)" />
<line x1="621.84" y1="192.18" x2="616.72" y2="191.28" stroke="#111" stroke-width="1.36" stroke-linecap="butt"/>
<text x="605.8" y="195.8" font-size="8.5" fill="#9a9a9a" text-anchor="middle" font-weight="normal" stroke="#9a9a9a" stroke-width="0.28" >S</text>
<text x="586.7" y="209.10000000000002" font-size="7.5" fill="#cacaca" text-anchor="middle" font-weight="normal" stroke="#cacaca" stroke-width="0.28" >-2.9 dB</text>
<text x="624.2" y="209.10000000000002" font-size="7.5" fill="#cacaca" text-anchor="middle" font-weight="normal" stroke="#cacaca" stroke-width="0.28" >-56.5 %</text>
<path d="M603.2,204.90000000000003 h1.6 l3.4,-3 v7.2 l-3.4,-3 h-1.6 Z" stroke="none" fill="#e5334b" stroke-width="1" />
<circle cx="568.3" cy="236.3" r="2.0" fill="none" stroke="#e5334b" stroke-width="1.2" />
<path d="M579.06,243.94 A10.8,10.8 0 1 1 594.34,243.94" stroke="#555" fill="none" stroke-width="1.6" />
<path d="M579.06,243.94 A10.8,10.8 0 0 1 592.10,226.95" stroke="#e5334b" fill="none" stroke-width="1.6" />
<circle cx="586.7" cy="236.3" r="8" fill="url(#kw)" />
<line x1="587.90" y1="234.22" x2="590.50" y2="229.72" stroke="#111" stroke-width="1.36" stroke-linecap="butt"/>
<path d="M616.56,243.94 A10.8,10.8 0 1 1 631.84,243.94" stroke="#555" fill="none" stroke-width="1.6" />
<path d="M624.20,225.50 A10.8,10.8 0 0 1 633.55,230.90" stroke="#e5334b" fill="none" stroke-width="1.6" />
<circle cx="624.2" cy="236.3" r="8" fill="url(#kw)" />
<line x1="626.28" y1="235.10" x2="630.78" y2="232.50" stroke="#111" stroke-width="1.36" stroke-linecap="butt"/>
<text x="605.8" y="239.5" font-size="8.5" fill="#9a9a9a" text-anchor="middle" font-weight="normal" stroke="#9a9a9a" stroke-width="0.28" >S</text>
<text x="586.7" y="252.8" font-size="7.5" fill="#cacaca" text-anchor="middle" font-weight="normal" stroke="#cacaca" stroke-width="0.28" >-7.2 dB</text>
<text x="624.2" y="252.8" font-size="7.5" fill="#cacaca" text-anchor="middle" font-weight="normal" stroke="#cacaca" stroke-width="0.28" >37.5 %</text>
<path d="M603.2,248.60000000000002 h1.6 l3.4,-3 v7.2 l-3.4,-3 h-1.6 Z" stroke="none" fill="#e5334b" stroke-width="1" />
<circle cx="568.3" cy="279.8" r="2.0" fill="none" stroke="#e5334b" stroke-width="1.2" />
<path d="M579.06,287.44 A10.8,10.8 0 1 1 594.34,287.44" stroke="#555" fill="none" stroke-width="1.6" />
<path d="M579.06,287.44 A10.8,10.8 0 1 1 596.05,274.40" stroke="#e5334b" fill="none" stroke-width="1.6" />
<circle cx="586.7" cy="279.8" r="8" fill="url(#kw)" />
<line x1="588.78" y1="278.60" x2="593.28" y2="276.00" stroke="#111" stroke-width="1.36" stroke-linecap="butt"/>
<path d="M616.56,287.44 A10.8,10.8 0 1 1 631.84,287.44" stroke="#555" fill="none" stroke-width="1.6" />
<circle cx="624.2" cy="279.8" r="8" fill="url(#kw)" />
<line x1="624.20" y1="277.40" x2="624.20" y2="272.20" stroke="#111" stroke-width="1.36" stroke-linecap="butt"/>
<text x="605.8" y="283.0" font-size="8.5" fill="#9a9a9a" text-anchor="middle" font-weight="normal" stroke="#9a9a9a" stroke-width="0.28" >S</text>
<text x="586.7" y="296.3" font-size="7.5" fill="#cacaca" text-anchor="middle" font-weight="normal" stroke="#cacaca" stroke-width="0.28" >-2.8 dB</text>
<text x="624.2" y="296.3" font-size="7.5" fill="#cacaca" text-anchor="middle" font-weight="normal" stroke="#cacaca" stroke-width="0.28" >0.00 %</text>
<path d="M603.2,292.1 h1.6 l3.4,-3 v7.2 l-3.4,-3 h-1.6 Z" stroke="none" fill="#e5334b" stroke-width="1" />
<circle cx="568.3" cy="293.3" r="2.0" fill="none" stroke="#7a2535" stroke-width="1.2" />
<circle cx="643.3" cy="192.60000000000002" r="2.6" fill="#e5334b" />
<rect x="652" y="172.3" width="132.7" height="84.5" fill="#2f2f2f" rx="3" />
<text x="718.35" y="180.60000000000002" font-size="7.5" fill="#e5334b" text-anchor="middle" font-weight="normal" stroke="#e5334b" stroke-width="0.28" >Low-pass LD</text>
<circle cx="658.3" cy="192.60000000000002" r="2.6" fill="#e5334b" />
<circle cx="658.3" cy="214.5" r="2.0" fill="none" stroke="#ef8a30" stroke-width="1.2" />
<path d="M667.29,198.61 A8.5,8.5 0 1 1 679.31,198.61" stroke="#444" fill="none" stroke-width="1.6" />
<circle cx="673.3" cy="192.60000000000002" r="6.5" fill="url(#kd)" />
<line x1="673.66" y1="190.03" x2="674.16" y2="186.49" stroke="#eee" stroke-width="1.2" stroke-linecap="butt"/>
<path d="M667.29,198.61 A8.5,8.5 0 0 1 671.10,184.39" stroke="#e5334b" fill="none" stroke-width="1.6" />
<path d="M667.29,220.51 A8.5,8.5 0 1 1 679.31,220.51" stroke="#444" fill="none" stroke-width="1.6" />
<path d="M673.30,206.00 A8.5,8.5 0 0 1 678.76,221.01" stroke="#ef8a30" fill="none" stroke-width="1.6" />
<circle cx="673.3" cy="214.5" r="6.5" fill="url(#kd)" />
<line x1="674.97" y1="216.49" x2="677.27" y2="219.23" stroke="#eee" stroke-width="1.2" stroke-linecap="butt"/>
<path d="M667.29,242.31 A8.5,8.5 0 1 1 679.31,242.31" stroke="#444" fill="none" stroke-width="1.6" />
<path d="M667.29,242.31 A8.5,8.5 0 0 1 673.30,227.80" stroke="#ef8a30" fill="none" stroke-width="1.6" />
<circle cx="673.3" cy="236.3" r="6.5" fill="url(#kd)" />
<line x1="673.30" y1="233.70" x2="673.30" y2="230.12" stroke="#eee" stroke-width="1.2" stroke-linecap="butt"/>
<path d="M667.3,247.9 l2,-1.6 v3.2 Z M679.3,247.9 l-2,-1.6 v3.2 Z" stroke="none" fill="#ef8a30" stroke-width="1" />
<rect x="669.6999999999999" y="244.5" width="2" height="6.8" fill="#ef8a30" />
<rect x="672.1999999999999" y="244.5" width="2" height="6.8" fill="#ef8a30" />
<rect x="674.6999999999999" y="244.5" width="2" height="6.8" fill="#ef8a30" />
<rect x="671.4" y="244.5" width="1.3" height="3.8" fill="#555" />
<rect x="673.9" y="244.5" width="1.3" height="3.8" fill="#555" />
<path d="M706.14,225.46 A17.2,17.2 0 1 1 730.46,225.46" stroke="#555" fill="none" stroke-width="1.8" />
<path d="M706.14,225.46 A17.2,17.2 0 0 1 726.37,198.11" stroke="#e5334b" fill="none" stroke-width="1.8" />
<circle cx="718.3" cy="213.3" r="14.3" fill="url(#kw)" />
<line x1="720.31" y1="209.51" x2="724.68" y2="201.31" stroke="#111" stroke-width="2.4310000000000005" stroke-linecap="butt"/>
<text x="718.3" y="238.3" font-size="7.5" fill="#cacaca" text-anchor="middle" font-weight="normal" stroke="#cacaca" stroke-width="0.28" >1.63 kHz</text>
<path d="M750.95,223.35 A12.8,12.8 0 1 1 769.05,223.35" stroke="#555" fill="none" stroke-width="1.6" />
<path d="M750.95,223.35 A12.8,12.8 0 0 1 754.59,202.70" stroke="#e5334b" fill="none" stroke-width="1.6" />
<circle cx="760" cy="214.3" r="10" fill="url(#kw)" />
<line x1="758.73" y1="211.58" x2="755.99" y2="205.69" stroke="#111" stroke-width="1.7000000000000002" stroke-linecap="butt"/>
<path d="M779,211.8 l-3,2.5 l3,2.5 Z" stroke="none" fill="#888" stroke-width="1" />
<path d="M756.3,234.5 Q760.3,232.3 760.3,228.10000000000002 Q760.3,232.3 764.3,234.5" stroke="#bbb" fill="none" stroke-width="1.1" />
<circle cx="760.3" cy="232.60000000000002" r="1.1" fill="#bbb" />
<text x="702" y="251.3" font-size="7.5" fill="#cacaca" text-anchor="middle" font-weight="normal" stroke="#cacaca" stroke-width="0.28" >6</text>
<text x="713" y="251.3" font-size="7.5" fill="#cacaca" text-anchor="middle" font-weight="normal" stroke="#cacaca" stroke-width="0.28" >12</text>
<text x="724" y="251.3" font-size="7.5" fill="#cacaca" text-anchor="middle" font-weight="normal" stroke="#cacaca" stroke-width="0.28" >18</text>
<text x="734.5" y="251.3" font-size="7.5" fill="#ef8a30" text-anchor="middle" font-weight="normal" stroke="#ef8a30" stroke-width="0.28" >24</text>
<rect x="729" y="253.60000000000002" width="11" height="1.1" fill="#b8703a" />
<rect x="744.5" y="253.60000000000002" width="16" height="1.1" fill="#b8703a" />
<path d="M748.5,244.8 V250.10000000000002 H756.5 V247.8 M752.5,250.10000000000002 V248.3" stroke="#ef8a30" fill="none" stroke-width="0.9" />
<path d="M765.5,243.8 V250.10000000000002 H773.5 M767.5,250.10000000000002 V246.3 M769.5,250.10000000000002 V247.3 M771.5,250.10000000000002 V248.3" stroke="#bbb" fill="none" stroke-width="0.9" />
<circle cx="778" cy="192.60000000000002" r="2.0" fill="none" stroke="#e5334b" stroke-width="1.2" />
<rect x="832.2" y="216.2" width="42.3" height="40.4" fill="#2f2f2f" rx="3" />
<circle cx="838" cy="236" r="2.0" fill="none" stroke="#e5334b" stroke-width="1.2" />
<path d="M846.5,230 V242 L858,236.5 Z" stroke="#e5334b" fill="none" stroke-width="0.8" />
<line x1="847.0" y1="230.5" x2="847.0" y2="242.0" stroke="#e5334b" stroke-width="0.9" />
<line x1="848.7" y1="231.4" x2="848.7" y2="241.1" stroke="#e5334b" stroke-width="0.9" />
<line x1="850.4" y1="232.3" x2="850.4" y2="240.2" stroke="#e5334b" stroke-width="0.9" />
<line x1="852.1" y1="233.2" x2="852.1" y2="239.3" stroke="#e5334b" stroke-width="0.9" />
<line x1="853.8" y1="234.1" x2="853.8" y2="238.4" stroke="#e5334b" stroke-width="0.9" />
<line x1="855.5" y1="235.0" x2="855.5" y2="237.5" stroke="#e5334b" stroke-width="0.9" />
<path d="M162,68 C185,100 210,192.5 247,192.5" stroke="#8f8434" fill="none" stroke-width="0.9" opacity="0.7"/>
<path d="M250,192.5 L246,189.7 L246,195.3 Z" stroke="none" fill="#f3d23c" stroke-width="1" />
<path d="M171,68 C190,95 220,106 247,106" stroke="#8f8434" fill="none" stroke-width="1" opacity="0.9"/>
<path d="M250,106 L246,103.2 L246,108.8 Z" stroke="none" fill="#f3d23c" stroke-width="1" />
<linearGradient id="gy" gradientUnits="userSpaceOnUse" x1="58" y1="0" x2="384" y2="0"><stop offset="0" stop-color="#8f8434" stop-opacity="0.25"/><stop offset="0.6" stop-color="#a89a3a" stop-opacity="0.4"/><stop offset="1" stop-color="#e0c840" stop-opacity="0.9"/></linearGradient>
<linearGradient id="gg" gradientUnits="userSpaceOnUse" x1="58" y1="0" x2="384" y2="0"><stop offset="0" stop-color="#7d8a2c" stop-opacity="0.3"/><stop offset="0.6" stop-color="#8a9a30" stop-opacity="0.5"/><stop offset="1" stop-color="#a8c838" stop-opacity="0.95"/></linearGradient>
<path d="M58,149.5 C150,149 300,146 384,144.7" stroke="url(#gy)" fill="none" stroke-width="1" />
<path d="M385,144.7 L381,141.89999999999998 L381,147.5 Z" stroke="none" fill="#f3d23c" stroke-width="1" />
<path d="M58,149.5 C150,150 300,154 384,154.2" stroke="url(#gg)" fill="none" stroke-width="1" />
<path d="M385,154.2 L381,151.39999999999998 L381,157.0 Z" stroke="none" fill="#9ac030" stroke-width="1" />
<path d="M58,149.5 C140,172 300,225 384,240.5" stroke="#7d8a2c" fill="none" stroke-width="0.9" opacity="0.8"/>
<path d="M385,240.5 L381,237.7 L381,243.3 Z" stroke="none" fill="#9ac030" stroke-width="1" />
<path d="M58,149.5 C140,190 300,290 384,327.5" stroke="#7d8a2c" fill="none" stroke-width="0.9" opacity="0.8"/>
<path d="M385,327.5 L381,324.7 L381,330.3 Z" stroke="none" fill="#9ac030" stroke-width="1" />
<path d="M103,249 C160,258 300,300 384,318" stroke="#8f8434" fill="none" stroke-width="0.9" opacity="0.8"/>
<path d="M385,318 L381,315.2 L381,320.8 Z" stroke="none" fill="#f3d23c" stroke-width="1" />
<path d="M103,249 C140,255 200,270 247,279.7" stroke="#f3d23c" fill="none" stroke-width="1.3" opacity="0.9"/>
<path d="M250,279.7 L246,276.9 L246,282.5 Z" stroke="none" fill="#f3d23c" stroke-width="1" />
<path d="M103,249 C115,252 60,268 70,279.7" stroke="#f3d23c" fill="none" stroke-width="1.3" />
<path d="M71,279.7 L67.5,277.25 L67.5,282.15 Z" stroke="none" fill="#f3d23c" stroke-width="1" />
<circle cx="103.3" cy="248.5" r="2.0" fill="none" stroke="#f3d23c" stroke-width="1.2" />
<path d="M103.3,236.3 C128,236.3 100,149 116,149" stroke="#b866e8" fill="none" stroke-width="1.4" />
<path d="M103.3,236.3 H115" stroke="#b866e8" fill="none" stroke-width="1.2" />
<path d="M116,236.3 L112.5,233.85000000000002 L112.5,238.75 Z" stroke="none" fill="#b866e8" stroke-width="1" />
<path d="M116,149 L112.5,146.55 L112.5,151.45 Z" stroke="none" fill="#b866e8" stroke-width="1" />
<circle cx="103.3" cy="236.3" r="2.6" fill="#b866e8" />
<circle cx="118" cy="236.3" r="2.6" fill="#b866e8" />
<circle cx="118" cy="149.2" r="2.6" fill="#b866e8" />
<circle cx="58.3" cy="149.4" r="2.6" fill="#d0e040" />
<path d="M238,149.5 L251,149.2" stroke="#f3d23c" fill="none" stroke-width="1.2" />
<circle cx="238" cy="149.5" r="2.6" fill="#f3d23c" />
<circle cx="238" cy="236.3" r="2.0" fill="none" stroke="#5aa3e0" stroke-width="1.2" />
<path d="M238,236.3 C300,236 330,233 384,231.3" stroke="#5aa3e0" fill="none" stroke-width="1.2" opacity="0.8"/>
<path d="M385,231.3 L381,228.5 L381,234.10000000000002 Z" stroke="none" fill="#5aa3e0" stroke-width="1" />
<path d="M193.3,279.7 C230,279.7 215,214.5 249,214.5" stroke="#5aa3e0" fill="none" stroke-width="1.2" />
<path d="M250,214.5 L246.5,212.05 L246.5,216.95 Z" stroke="none" fill="#5aa3e0" stroke-width="1" />
<path d="M193.3,279.7 C230,279.7 215,300.8 249,300.8" stroke="#5aa3e0" fill="none" stroke-width="1.2" />
<path d="M250,300.8 L246.5,298.35 L246.5,303.25 Z" stroke="none" fill="#5aa3e0" stroke-width="1" />
<circle cx="193.3" cy="279.7" r="2.0" fill="none" stroke="#5aa3e0" stroke-width="1.2" />
<path d="M372.8,192.5 C395,192.5 370,182 330,170 C290,156 245,140 242,131 C241,128 243,128 249,128" stroke="#5a8fc8" fill="none" stroke-width="1.1" />
<path d="M250,128 L246.5,125.55 L246.5,130.45 Z" stroke="none" fill="#5aa3e0" stroke-width="1" />
<path d="M372.8,192.5 H429" stroke="#5aa3e0" fill="none" stroke-width="1.3" />
<path d="M430,192.5 L426,189.7 L426,195.3 Z" stroke="none" fill="#5aa3e0" stroke-width="1" />
<path d="M508,128 C530,128 535,80 550,68" stroke="#4a7aa8" fill="none" stroke-width="1.1" />
<path d="M508,300.8 C562,300.8 612,214.5 654,214.5" stroke="#4a7aa8" fill="none" stroke-width="1.1" />
<path d="M655,214.5 L651,211.7 L651,217.3 Z" stroke="none" fill="#5aa3e0" stroke-width="1" />
<path d="M372.8,106 H429" stroke="#62c52b" fill="none" stroke-width="1.3" />
<path d="M430,106 L426,103.2 L426,108.8 Z" stroke="none" fill="#62c52b" stroke-width="1" />
<path d="M418.3,149.3 H429" stroke="#f3d23c" fill="none" stroke-width="1.3" />
<path d="M430,149.3 L426,146.5 L426,152.10000000000002 Z" stroke="none" fill="#f3d23c" stroke-width="1" />
<path d="M418.3,235.8 H429" stroke="#f3d23c" fill="none" stroke-width="1.3" />
<path d="M430,235.8 L426,233.0 L426,238.60000000000002 Z" stroke="none" fill="#f3d23c" stroke-width="1" />
<path d="M418.3,322.8 H429" stroke="#f3d23c" fill="none" stroke-width="1.3" />
<path d="M430,322.8 L426,320.0 L426,325.6 Z" stroke="none" fill="#f3d23c" stroke-width="1" />
<circle cx="433" cy="149.3" r="2.6" fill="#f3d23c" />
<circle cx="433" cy="235.8" r="2.0" fill="none" stroke="#f3d23c" stroke-width="1.2" />
<circle cx="433" cy="322.8" r="2.0" fill="none" stroke="#f3d23c" stroke-width="1.2" />
<path d="M372.8,279.7 H429" stroke="#f3d23c" fill="none" stroke-width="1.3" />
<path d="M430,279.7 L426,276.9 L426,282.5 Z" stroke="none" fill="#f3d23c" stroke-width="1" />
<path d="M508,106 C545,106 535,192.5 565,192.5" stroke="#8e2535" fill="none" stroke-width="1.2" />
<path d="M553.3,192.5 H565" stroke="#e5334b" fill="none" stroke-width="1.3" />
<path d="M566,192.5 L562.5,190.05 L562.5,194.95 Z" stroke="none" fill="#e5334b" stroke-width="1" />
<path d="M553.3,192.5 C575,192.5 545,236.3 565,236.3" stroke="#e5334b" fill="none" stroke-width="1.4" />
<path d="M566,236.3 L562.5,233.85000000000002 L562.5,238.75 Z" stroke="none" fill="#e5334b" stroke-width="1" />
<path d="M508,279.1 H519" stroke="#e5334b" fill="none" stroke-width="1.2" />
<path d="M519.5,279.1 L516.0,276.65000000000003 L516.0,281.55 Z" stroke="none" fill="#e5334b" stroke-width="1" />
<path d="M554,279.1 H565" stroke="#ef8a30" fill="none" stroke-width="1.2" />
<path d="M566,279.1 L562.5,276.65000000000003 L562.5,281.55 Z" stroke="none" fill="#ef8a30" stroke-width="1" />
<path d="M643.3,192.5 H655" stroke="#e5334b" fill="none" stroke-width="1.3" />
<path d="M656,192.5 L652.5,190.05 L652.5,194.95 Z" stroke="none" fill="#e5334b" stroke-width="1" />
<path d="M778,192.5 C820,192.5 800,236 833,236" stroke="#a02a3c" fill="none" stroke-width="1.3" />
<path d="M834,236 L830.5,233.55 L830.5,238.45 Z" stroke="none" fill="#e5334b" stroke-width="1" />
<rect x="2.8" y="372.8" width="894.6" height="146.9" fill="#0c0c0c" rx="2" stroke="#555555" stroke-width="1" />
<rect x="3.2" y="373.3" width="2.8" height="146" fill="#d56b98" />
<rect x="6" y="373.3" width="17.5" height="146" fill="#545454" />
<text x="0" y="0" font-size="7.7" fill="#d8d8d8" text-anchor="middle" font-weight="bold" textLength="49" lengthAdjust="spacingAndGlyphs" transform="translate(17.9,446.8) rotate(-90)">BLOCK ROCKIN'</text>
<path d="M26.9,446.2 h5.6 M29.7,443.4 v5.6" stroke="#d0d0d0" fill="none" stroke-width="1.5" />
<rect x="36.3" y="380.3" width="246" height="131.7" fill="#3a3a3a" rx="2" />
<rect x="53.3" y="381" width="229" height="130" fill="#484848" />
<rect x="37" y="381" width="16.3" height="130" fill="#3c3c3c" />
<circle cx="44.7" cy="388.7" r="3" fill="none" stroke="#ef8a30" stroke-width="1.2" />
<line x1="44.7" y1="385" x2="44.7" y2="388.5" stroke="#ef8a30" stroke-width="1.2" />
<rect x="41.5" y="400.5" width="6.5" height="5" fill="#bbb" />
<rect x="41.5" y="399.5" width="3" height="1.5" fill="#bbb" />
<text x="0" y="0" font-size="7.7" fill="#d8d8d8" text-anchor="middle" font-weight="bold" textLength="36.6" lengthAdjust="spacingAndGlyphs" transform="translate(47.2,446.5) rotate(-90)">MONO GRID</text>
<rect x="41.3" y="493.5" width="1.6" height="1.6" fill="#ccc" />
<rect x="41.3" y="496.2" width="1.6" height="1.6" fill="#ccc" />
<rect x="44.0" y="493.5" width="1.6" height="1.6" fill="#ccc" />
<rect x="44.0" y="496.2" width="1.6" height="1.6" fill="#ccc" />
<rect x="46.699999999999996" y="493.5" width="1.6" height="1.6" fill="#ccc" />
<rect x="46.699999999999996" y="496.2" width="1.6" height="1.6" fill="#ccc" />
<path d="M41.5,505 h6" stroke="#ef8a30" fill="none" stroke-width="1" />
<circle cx="42" cy="505" r="1.3" fill="#ef8a30" />
<path d="M49,505 L46.5,503.25 L46.5,506.75 Z" stroke="none" fill="#ef8a30" stroke-width="1" />
<rect x="56.3" y="382.7" width="41.6" height="40.5" fill="#2a2a2a" />
<rect x="100.8" y="382.7" width="18.2" height="40.5" fill="#444444" />
<path d="M107.2,403.2 h5.6 M110,400.4 v5.6" stroke="#d0d0d0" fill="none" stroke-width="1.5" />
<rect x="56.3" y="425.7" width="41.6" height="40.5" fill="#2a2a2a" />
<rect x="100.8" y="425.7" width="18.2" height="40.5" fill="#444444" />
<path d="M107.2,446.2 h5.6 M110,443.4 v5.6" stroke="#d0d0d0" fill="none" stroke-width="1.5" />
<rect x="56.3" y="469.0" width="41.6" height="40.5" fill="#2a2a2a" />
<rect x="100.8" y="469.0" width="18.2" height="40.5" fill="#444444" />
<path d="M107.2,489.5 h5.6 M110,486.7 v5.6" stroke="#d0d0d0" fill="none" stroke-width="1.5" />
<line x1="56" y1="398.5" x2="98" y2="398.5" stroke="#3d5670" stroke-width="0.6" />
<path d="M60.7,409 Q63,396 65.7,386.7 Q68,392 70.3,397.8 M78.9,398.9 Q81,405 84,409.5" stroke="#d8c848" fill="none" stroke-width="0.9" />
<path d="M57,446 L63,434 L71,446 L78,434 L86,446 L93,434 L98,440" stroke="#7a4a2a" fill="none" stroke-width="0.9" />
<circle cx="73.9" cy="418.9" r="2.2" fill="#6fd0ef" />
<path d="M73.9,418.9 h6.5" stroke="#6fd0ef" fill="none" stroke-width="1.1" />
<path d="M82.5,418.9 L79.5,416.79999999999995 L79.5,421.0 Z" stroke="none" fill="#6fd0ef" stroke-width="1" />
<circle cx="73.9" cy="461.9" r="2.2" fill="#6fd0ef" />
<path d="M73.9,461.9 h6.5" stroke="#6fd0ef" fill="none" stroke-width="1.1" />
<path d="M82.5,461.9 L79.5,459.79999999999995 L79.5,464.0 Z" stroke="none" fill="#6fd0ef" stroke-width="1" />
<circle cx="73.9" cy="505.3" r="2.2" fill="#eee" />
<path d="M73.9,505.3 h6.5" stroke="#eee" fill="none" stroke-width="1.1" />
<path d="M82.5,505.3 L79.5,503.2 L79.5,507.40000000000003 Z" stroke="none" fill="#eee" stroke-width="1" />
<path d="M56,481 H66 V486 H73 M83,486 H88 V480.5 H98" stroke="#b0a030" fill="none" stroke-width="0.8" />
<path d="M71.5,480.5 L77.5,478 L83.5,480.5 V487 L77.5,490 L71.5,487 Z" stroke="none" fill="#a8a8a8" stroke-width="1" />
<path d="M71.5,480.5 L77.5,483 L83.5,480.5 M77.5,483 V490" stroke="#777" fill="none" stroke-width="0.6" />
<rect x="120.4" y="382.4" width="160.6" height="83.6" fill="url(#fgrid)" />
<rect x="133.6" y="407" width="128" height="42" fill="#1b3044" rx="1.5" stroke="#4aa8e0" stroke-width="1.2" fill-opacity="0.85"/>
<g filter="url(#bl)" opacity="0.7">
<rect x="149" y="402.4" width="5.4" height="4" fill="#c8a838" />
<rect x="174.4" y="396.4" width="6" height="5" fill="#4a8ac8" />
<rect x="200.6" y="396.4" width="6" height="5.6" fill="#d03050" />
<rect x="213.6" y="402.4" width="6" height="4" fill="#c03050" />
<rect x="136" y="415" width="6" height="6" fill="#8aa040" />
<rect x="168" y="409" width="19" height="12" fill="#3aa040" />
<rect x="188" y="415" width="5" height="6" fill="#4ab040" />
<rect x="194" y="409" width="13" height="12" fill="#3a9a40" />
<rect x="136" y="428" width="12" height="5.6" fill="#3a80c0" />
<rect x="168" y="422" width="19" height="12" fill="#3a88c8" />
<rect x="188" y="428" width="5" height="5.6" fill="#3a88c8" />
<rect x="194" y="422" width="19" height="12" fill="#3a88c8" />
<rect x="214" y="421" width="12" height="6.6" fill="#c03060" />
<rect x="227" y="421" width="19" height="13" fill="#c03060" />
<rect x="253" y="428" width="5.4" height="5.4" fill="#c03050" />
<rect x="142" y="434" width="19" height="12" fill="#3a80c0" />
<rect x="168" y="434" width="19" height="12" fill="#a0a040" />
<rect x="188" y="440" width="5" height="6" fill="#a0b040" />
<rect x="194" y="434" width="12.5" height="12" fill="#c08030" />
<rect x="207" y="434" width="6" height="12" fill="#c08030" />
</g>
<g opacity="0.55">
<rect x="149.5" y="402.9" width="4.4" height="3" fill="#c8a838" />
<rect x="149.5" y="402.9" width="4.4" height="3" fill="url(#glow)" />
<rect x="174.9" y="396.9" width="5" height="4" fill="#4a8ac8" />
<rect x="174.9" y="396.9" width="5" height="4" fill="url(#glow)" />
<rect x="201.1" y="396.9" width="5" height="4.6" fill="#d03050" />
<rect x="201.1" y="396.9" width="5" height="4.6" fill="url(#glow)" />
<rect x="214.1" y="402.9" width="5" height="3" fill="#c03050" />
<rect x="214.1" y="402.9" width="5" height="3" fill="url(#glow)" />
<rect x="136.5" y="415.5" width="5" height="5" fill="#8aa040" />
<rect x="136.5" y="415.5" width="5" height="5" fill="url(#glow)" />
<rect x="168.5" y="409.5" width="18" height="11" fill="#3aa040" />
<rect x="168.5" y="409.5" width="18" height="11" fill="url(#glow)" />
<rect x="188.5" y="415.5" width="4" height="5" fill="#4ab040" />
<rect x="188.5" y="415.5" width="4" height="5" fill="url(#glow)" />
<rect x="194.5" y="409.5" width="12" height="11" fill="#3a9a40" />
<rect x="194.5" y="409.5" width="12" height="11" fill="url(#glow)" />
<rect x="136.5" y="428.5" width="11" height="4.6" fill="#3a80c0" />
<rect x="136.5" y="428.5" width="11" height="4.6" fill="url(#glow)" />
<rect x="168.5" y="422.5" width="18" height="11" fill="#3a88c8" />
<rect x="168.5" y="422.5" width="18" height="11" fill="url(#glow)" />
<rect x="188.5" y="428.5" width="4" height="4.6" fill="#3a88c8" />
<rect x="188.5" y="428.5" width="4" height="4.6" fill="url(#glow)" />
<rect x="194.5" y="422.5" width="18" height="11" fill="#3a88c8" />
<rect x="194.5" y="422.5" width="18" height="11" fill="url(#glow)" />
<rect x="214.5" y="421.5" width="11" height="5.6" fill="#c03060" />
<rect x="214.5" y="421.5" width="11" height="5.6" fill="url(#glow)" />
<rect x="227.5" y="421.5" width="18" height="12" fill="#c03060" />
<rect x="227.5" y="421.5" width="18" height="12" fill="url(#glow)" />
<rect x="253.5" y="428.5" width="4.4" height="4.4" fill="#c03050" />
<rect x="253.5" y="428.5" width="4.4" height="4.4" fill="url(#glow)" />
<rect x="142.5" y="434.5" width="18" height="11" fill="#3a80c0" />
<rect x="142.5" y="434.5" width="18" height="11" fill="url(#glow)" />
<rect x="168.5" y="434.5" width="18" height="11" fill="#a0a040" />
<rect x="168.5" y="434.5" width="18" height="11" fill="url(#glow)" />
<rect x="188.5" y="440.5" width="4" height="5" fill="#a0b040" />
<rect x="188.5" y="440.5" width="4" height="5" fill="url(#glow)" />
<rect x="194.5" y="434.5" width="11.5" height="11" fill="#c08030" />
<rect x="194.5" y="434.5" width="11.5" height="11" fill="url(#glow)" />
<rect x="207.5" y="434.5" width="5" height="11" fill="#c08030" />
<rect x="207.5" y="434.5" width="5" height="11" fill="url(#glow)" />
</g>
<rect x="120.4" y="466" width="160.6" height="2" fill="#3a3a3a" />
<rect x="120.4" y="468" width="160.6" height="43" fill="#323232" />
<path d="M133.51,494.49 A12,12 0 1 1 150.49,494.49" stroke="#555" fill="none" stroke-width="1.6" />
<circle cx="142" cy="486" r="9.5" fill="url(#kd)" />
<line x1="142.00" y1="482.20" x2="142.00" y2="476.98" stroke="#eee" stroke-width="1.6150000000000002" stroke-linecap="butt"/>
<path d="M139.92,474.18 A12,12 0 0 1 144.08,474.18" stroke="#e5334b" fill="none" stroke-width="1.6" />
<text x="142" y="505.5" font-size="7.5" fill="#cacaca" text-anchor="middle" font-weight="normal" stroke="#cacaca" stroke-width="0.28" >Pitch</text>
<path d="M165.91,494.49 A12,12 0 1 1 182.89,494.49" stroke="#555" fill="none" stroke-width="1.6" />
<circle cx="174.4" cy="486" r="9.5" fill="url(#kd)" />
<line x1="171.71" y1="488.69" x2="168.02" y2="492.38" stroke="#eee" stroke-width="1.6150000000000002" stroke-linecap="butt"/>
<text x="174.4" y="505.5" font-size="7.5" fill="#cacaca" text-anchor="middle" font-weight="normal" stroke="#cacaca" stroke-width="0.28" >Glide</text>
<path d="M187,505 H190 V499 H193 M194,499 V505 M196,499 V505" stroke="#888" fill="none" stroke-width="0.8" />
<rect x="198" y="472" width="40" height="35" fill="#3a3a3a" rx="2" stroke="#555" stroke-width="1.2" />
<rect x="201" y="474.5" width="34.5" height="13.5" fill="#262626" />
<line x1="203" y1="475.5" x2="233.5" y2="475.5" stroke="#3a6a90" stroke-width="1" />
<text x="218.3" y="484.5" font-size="7.5" fill="#e0e0e0" text-anchor="middle" font-weight="normal" stroke="#e0e0e0" stroke-width="0.28" >Note FX</text>
<rect x="201" y="490.5" width="34.5" height="14" fill="#262626" />
<line x1="203" y1="491.5" x2="233.5" y2="491.5" stroke="#3a6a90" stroke-width="1" />
<text x="218.3" y="501" font-size="7.5" fill="#e0e0e0" text-anchor="middle" font-weight="normal" stroke="#e0e0e0" stroke-width="0.28" >FX</text>
<path d="M251.11,494.49 A12,12 0 1 1 268.09,494.49" stroke="#555" fill="none" stroke-width="1.6" />
<path d="M251.11,494.49 A12,12 0 1 1 271.42,483.92" stroke="#e5334b" fill="none" stroke-width="1.6" />
<circle cx="259.6" cy="486" r="9.5" fill="url(#kd)" />
<line x1="263.34" y1="485.34" x2="268.49" y2="484.43" stroke="#eee" stroke-width="1.6150000000000002" stroke-linecap="butt"/>
<text x="259.6" y="505.5" font-size="7.5" fill="#cacaca" text-anchor="middle" font-weight="normal" stroke="#cacaca" stroke-width="0.28" >Out</text>
<rect x="287" y="497" width="3" height="15.4" fill="#6ac030" />
<rect x="290" y="498.5" width="2.5" height="13.9" fill="#58a828" />
<rect x="287" y="495" width="3" height="1.5" fill="#d06030" />
<rect x="290" y="497" width="2.5" height="1" fill="#e0a030" />
<rect x="317.5" y="497" width="3" height="15.4" fill="#6ac030" />
<rect x="320.5" y="498.5" width="2.5" height="13.9" fill="#58a828" />
<rect x="317.5" y="495" width="3" height="1.5" fill="#d06030" />
<rect x="320.5" y="497" width="2.5" height="1" fill="#e0a030" />
<rect x="347" y="497" width="3" height="15.4" fill="#6ac030" />
<rect x="350" y="498.5" width="2.5" height="13.9" fill="#58a828" />
<rect x="347" y="495" width="3" height="1.5" fill="#d06030" />
<rect x="350" y="497" width="2.5" height="1" fill="#e0a030" />
<path d="M286.5,446.2 h5.6 M289.3,443.4 v5.6" stroke="#d0d0d0" fill="none" stroke-width="1.5" />
<path d="M316.7,446.2 h5.6 M319.5,443.4 v5.6" stroke="#d0d0d0" fill="none" stroke-width="1.5" />
<path d="M346.59999999999997,446.2 h5.6 M349.4,443.4 v5.6" stroke="#d0d0d0" fill="none" stroke-width="1.5" />
<rect x="296" y="380.2" width="17.2" height="131.5" fill="#3d3d3d" rx="3" />
<circle cx="304.5" cy="388.2" r="3" fill="none" stroke="#ef8a30" stroke-width="1.2" />
<line x1="304.5" y1="384.5" x2="304.5" y2="388" stroke="#ef8a30" stroke-width="1.2" />
<rect x="301.3" y="400.5" width="6.5" height="5" fill="#bbb" />
<rect x="301.3" y="399.5" width="3" height="1.5" fill="#bbb" />
<text x="0" y="0" font-size="7" fill="#d8d8d8" text-anchor="middle" font-weight="bold" textLength="13.7" lengthAdjust="spacingAndGlyphs" transform="translate(307.3,446.4) rotate(-90)">EQ-5</text>
<rect x="301.5" y="494.0" width="1.5" height="1.5" fill="#ccc" />
<rect x="301.5" y="496.4" width="1.5" height="1.5" fill="#ccc" />
<rect x="303.9" y="494.0" width="1.5" height="1.5" fill="#ccc" />
<rect x="303.9" y="496.4" width="1.5" height="1.5" fill="#ccc" />
<rect x="306.3" y="494.0" width="1.5" height="1.5" fill="#ccc" />
<rect x="306.3" y="496.4" width="1.5" height="1.5" fill="#ccc" />
<circle cx="302" cy="505.3" r="1.5" fill="none" stroke="#ccc" stroke-width="0.9" />
<path d="M303.5,505.3 h4" stroke="#ccc" fill="none" stroke-width="0.9" />
<path d="M308.5,505.3 L306.5,503.90000000000003 L306.5,506.7 Z" stroke="none" fill="#ccc" stroke-width="1" />
<rect x="326.1" y="380.2" width="17.2" height="131.5" fill="#3d3d3d" rx="3" />
<circle cx="334.6" cy="388.2" r="3" fill="none" stroke="#ef8a30" stroke-width="1.2" />
<line x1="334.6" y1="384.5" x2="334.6" y2="388" stroke="#ef8a30" stroke-width="1.2" />
<rect x="331.40000000000003" y="400.5" width="6.5" height="5" fill="#bbb" />
<rect x="331.40000000000003" y="399.5" width="3" height="1.5" fill="#bbb" />
<text x="0" y="0" font-size="7" fill="#d8d8d8" text-anchor="middle" font-weight="bold" textLength="23" lengthAdjust="spacingAndGlyphs" transform="translate(337.40000000000003,446.4) rotate(-90)">REVERB</text>
<rect x="331.6" y="494.0" width="1.5" height="1.5" fill="#ccc" />
<rect x="331.6" y="496.4" width="1.5" height="1.5" fill="#ccc" />
<rect x="334.0" y="494.0" width="1.5" height="1.5" fill="#ccc" />
<rect x="334.0" y="496.4" width="1.5" height="1.5" fill="#ccc" />
<rect x="336.40000000000003" y="494.0" width="1.5" height="1.5" fill="#ccc" />
<rect x="336.40000000000003" y="496.4" width="1.5" height="1.5" fill="#ccc" />
<circle cx="332.1" cy="505.3" r="1.5" fill="none" stroke="#ccc" stroke-width="0.9" />
<path d="M333.6,505.3 h4" stroke="#ccc" fill="none" stroke-width="0.9" />
<path d="M338.6,505.3 L336.6,503.90000000000003 L336.6,506.7 Z" stroke="none" fill="#ccc" stroke-width="1" />
<rect x="300" y="480.5" width="9" height="7" fill="none" stroke="#bbb" stroke-width="1" rx="1.5"/>
<line x1="300" y1="482.5" x2="309" y2="482.5" stroke="#bbb" stroke-width="1" />
<rect x="0" y="520.2" width="900" height="21.8" fill="#2e2e2e" />
<rect x="10.5" y="528" width="4" height="6" fill="#ccc" />
<rect x="11.5" y="526" width="2" height="1.5" fill="#ccc" />
<line x1="23.3" y1="525" x2="23.3" y2="537" stroke="#555" stroke-width="1" />
<text x="33.3" y="534.3" font-size="7.5" fill="#ef8a30" text-anchor="start" font-weight="normal" stroke="#ef8a30" stroke-width="0.28" textLength="31" lengthAdjust="spacingAndGlyphs">ARRANGE</text>
<text x="73.8" y="534.3" font-size="7.5" fill="#cfcfcf" text-anchor="start" font-weight="normal" stroke="#cfcfcf" stroke-width="0.28" textLength="12.9" lengthAdjust="spacingAndGlyphs">MIX</text>
<text x="95" y="534.3" font-size="7.5" fill="#cfcfcf" text-anchor="start" font-weight="normal" stroke="#cfcfcf" stroke-width="0.28" textLength="15" lengthAdjust="spacingAndGlyphs">EDIT</text>
<line x1="119.5" y1="525" x2="119.5" y2="537" stroke="#555" stroke-width="1" />
<path d="M129,528 h3 M133,528 h2 M129,531 h2 M131.5,531 h3 M129,534 h3 M133,534 h2" stroke="#ccc" fill="none" stroke-width="1.2" />
<path d="M147,533.5 l5,-5" stroke="#ccc" fill="none" stroke-width="1.3" />
<circle cx="147.5" cy="533" r="1.8" fill="none" stroke="#ccc" stroke-width="1" />
<circle cx="151.5" cy="529" r="1.8" fill="none" stroke="#ccc" stroke-width="1" />
<rect x="164.5" y="526.5" width="8" height="8.5" fill="none" stroke="#ef8a30" stroke-width="1.6" rx="1"/>
<rect x="182.5" y="526.5" width="1.8" height="8.5" fill="#ddd" />
<rect x="185.0" y="526.5" width="1.8" height="8.5" fill="#ddd" />
<rect x="187.5" y="526.5" width="1.8" height="8.5" fill="#ddd" />
<rect x="805" y="528" width="7" height="5" fill="#ccc" />
<rect x="805" y="527" width="3" height="1.5" fill="#ccc" />
<path d="M822,526 h4.5 l2.5,2.5 v6 h-7 Z" stroke="none" fill="#ccc" stroke-width="1" />
<path d="M841,528 h8 M846,526 l2.5,2 M841,532.5 h8 M843.5,534.5 l-2.5,-2" stroke="#ccc" fill="none" stroke-width="1.1" />
<path d="M858,529 v-3 h1.5 v3 h3 a1.5,1.5 0 0 1 1.5,1.5 v3 h-6 Z" stroke="none" fill="#ccc" stroke-width="1" />
<line x1="876" y1="525" x2="876" y2="537" stroke="#555" stroke-width="1.2" />
<rect x="883.5" y="527" width="8" height="7.5" fill="#ddd" />
<line x1="886.3" y1="527" x2="886.3" y2="534.5" stroke="#555" stroke-width="0.7" />
<line x1="889" y1="527" x2="889" y2="534.5" stroke="#555" stroke-width="0.7" />
</svg>
</body></html>
